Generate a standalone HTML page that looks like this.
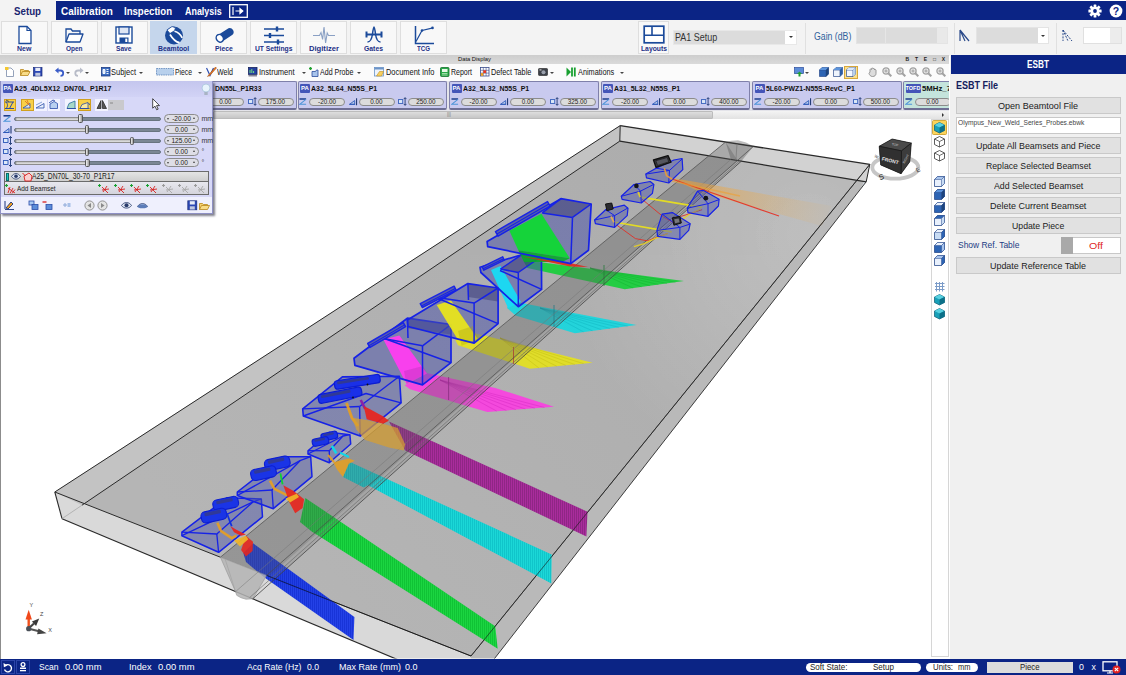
<!DOCTYPE html>
<html><head><meta charset="utf-8"><title>ESBT</title>
<style>
*{box-sizing:border-box;margin:0;padding:0}
html,body{width:1126px;height:675px;overflow:hidden;background:#fff;font-family:"Liberation Sans",sans-serif;font-size:9px;color:#222}
div,span,b,i,svg{position:absolute;white-space:nowrap}
#view{left:0;top:0;width:1126px;height:675px}
#top{left:0;top:1px;width:1126px;height:18.7px;background:#0b2485}
#top b{height:19px;line-height:19px;color:#fff}
#ribbon{left:0;top:19.7px;width:1126px;height:36.3px;background:#f3f3f3}
.rb{top:1.8px;width:47px;height:32.3px;background:#f8f8f8;border:1px solid #dedede;text-align:center}

.rb.sel{background:#c5d6ec;border-color:#c5d6ec}
.rb svg{left:50%;top:3px;margin-left:-11px}
.sep{top:2px;width:1px;height:31px;background:#e0e0e0}
#gstrip{left:0;top:55.2px;width:948.7px;height:8.6px;background:linear-gradient(#cdcdcd,#dadada);font-size:5.8px;color:#111;line-height:9px}
#tbar{left:0;top:63.7px;width:948.7px;height:17.3px;background:#fbfbfb;font-size:8.3px;line-height:15px;color:#111}
#tbar span{top:1px}
#tbar i.ar{top:8px;width:0;height:0;border:2px solid transparent;border-top:2.5px solid #444}
#probes{left:0;top:81px;width:948.7px;overflow:hidden;height:30px;background:#e4e4ea}
.pt{top:-0.5px;height:29.5px;background:#c9caef;border:1px solid #7f80aa;border-bottom:2px solid #6e6f94;border-radius:2px;overflow:hidden}

.pt i.pa{left:1.5px;top:2.5px;width:10px;height:9px;background:#4455b8;color:#fff;font-size:6px;font-style:normal;font-weight:bold;line-height:9px;text-align:center;border-radius:1px}
.pill{top:16px;height:8.5px;width:36px;border:1px solid #8c8c8c;border-radius:5px;background:#dcdcdc;font-size:6.3px;line-height:6.5px;text-align:center;color:#222}
.pic{top:15.5px;width:9px;height:9px}
#hscroll{left:213px;top:111px;width:735.7px;height:8px;background:linear-gradient(#f4f4f4,#e2e2e2)}
#right{left:950px;top:56px;width:176px;height:603px;background:#f0f0f0}
#right .btn{left:5.5px;width:165.5px;height:17.2px;background:#e1e1e1;border:1px solid #c9c9c9;text-align:center;font-size:9.3px;line-height:14.5px;color:#222}
#status{left:0;top:659px;width:1126px;height:16px;background:#0b2485;color:#fff;font-size:8.3px;line-height:15px}
#status span{top:0.5px}
#panel{left:0;top:81px;width:212.5px;height:132.5px;background:#d7d8f8;border:1px solid #8e90c4;border-top:none;box-shadow:1.5px 1.5px 2px rgba(60,60,80,.65)}
#panel .sl{left:13px;width:147px;height:4px;border-radius:2px;background:#7b8794;border:0.5px solid #687480}
#panel .sl i{left:-0.5px;top:-0.5px;height:4px;background:linear-gradient(#bdbdbd,#e2e2e2);border-radius:2px;border:0.5px solid #8c8c8c}
#panel .kn{width:4.5px;height:8.5px;background:linear-gradient(90deg,#f4f4f4,#999);border:0.5px solid #555;border-radius:1.5px}
#panel .pv{left:163px;width:35px;height:9px;border:1px solid #8c8c8c;border-radius:5px;background:#dedee6;font-size:6.6px;line-height:7px;text-align:center;color:#222}
#panel .un{left:200.5px;font-size:7px;line-height:9px;color:#333}
</style></head><body>
<div id="top">
<div style="left:0;top:-1px;width:56px;height:21px;background:#f3f3f3"></div>
<b style="left:14.2px;top:1.2px;font-size:10px;color:#1a2670;transform:scaleX(0.972);transform-origin:0 0;">Setup</b><b style="left:60.7px;top:0.9px;font-size:10px;transform:scaleX(0.992);transform-origin:0 0;">Calibration</b><b style="left:123.7px;top:0.9px;font-size:10px;transform:scaleX(0.960);transform-origin:0 0;">Inspection</b><b style="left:184.5px;top:0.9px;font-size:10px;transform:scaleX(0.892);transform-origin:0 0;">Analysis</b>
<svg style="left:229px;top:3px" width="19" height="14" viewBox="0 0 19 14"><rect x="0.7" y="0.7" width="17.6" height="12.6" fill="none" stroke="#fff" stroke-width="1.3"/><path d="M4 3v8M6.5 7h7M11 4.6L13.8 7 11 9.4z" stroke="#fff" stroke-width="1.2" fill="#fff"/></svg>
<svg style="left:1088px;top:3px" width="14" height="14" viewBox="-7 -7 14 14"><g fill="#fff"><circle r="4.3"/><g id="gt"><rect x="-1.4" y="-6.6" width="2.8" height="13.2" rx="0.5"/></g><use href="#gt" transform="rotate(45)"/><use href="#gt" transform="rotate(90)"/><use href="#gt" transform="rotate(135)"/></g><circle r="1.9" fill="#0b2485"/></svg>
<svg style="left:1108.5px;top:3px" width="14" height="14" viewBox="-7 -7 14 14"><circle r="6.4" fill="#fff"/><text x="0" y="3.6" text-anchor="middle" font-family="Liberation Sans,sans-serif" font-weight="bold" font-size="10.5" fill="#0b2485">?</text></svg>
</div>
<div id="ribbon"><div class="rb" style="left:1px;width:47px"><svg width="22" height="20" viewBox="0 0 22 20"><path d="M5 1.5h8l4 4v13H5z" fill="#fff" stroke="#1b4a9a" stroke-width="1.3"/><path d="M13 1.5v4h4" fill="none" stroke="#1b4a9a" stroke-width="1.2"/></svg><b style="left:15.35px;top:22px;font-size:7.8px;line-height:9px;color:#1c2f86;transform:scaleX(0.892);transform-origin:0 0;">New</b></div><div class="rb" style="left:50.5px;width:47px"><svg width="22" height="20" viewBox="0 0 22 20"><path d="M3 17V4h5l1.5 2H17v3" fill="none" stroke="#1b4a9a" stroke-width="1.3"/><path d="M3 17l3-8h14l-3 8z" fill="#fff" stroke="#1b4a9a" stroke-width="1.3" stroke-linejoin="round"/></svg><b style="left:14.25px;top:22px;font-size:7.8px;line-height:9px;color:#1c2f86;transform:scaleX(0.828);transform-origin:0 0;">Open</b></div><div class="rb" style="left:100.5px;width:47px"><svg width="22" height="20" viewBox="0 0 22 20"><rect x="3" y="2" width="16" height="16" fill="#fff" stroke="#1b4a9a" stroke-width="1.4"/><rect x="6" y="2" width="10" height="7" fill="#dfe6f4" stroke="#1b4a9a" stroke-width="1.2"/><rect x="6.5" y="12.5" width="9" height="5.5" fill="#1b4a9a"/><rect x="12.3" y="13.6" width="2" height="3.4" fill="#fff"/></svg><b style="left:14.75px;top:22px;font-size:7.8px;line-height:9px;color:#1c2f86;transform:scaleX(0.851);transform-origin:0 0;">Save</b></div><div class="rb sel" style="left:150px;width:47px"><svg width="22" height="20" viewBox="0 0 22 20"><circle cx="11" cy="10.5" r="9" fill="#1b4a9a"/><path d="M4 5l5-3.5 3.5 1.2-1 3L7 8.5z" fill="#fff" stroke="#1b4a9a" stroke-width="0.8"/><path d="M7 9.5c3 5 6 7.5 9.5 8.2M11.5 6.3c3 .8 6 3 7.7 6.5" stroke="#fff" stroke-width="1.7" fill="none"/></svg><b style="left:6.9px;top:22px;font-size:7.8px;line-height:9px;color:#1c2f86;transform:scaleX(0.878);transform-origin:0 0;">Beamtool</b></div><div class="rb" style="left:200px;width:47px"><svg width="22" height="20" viewBox="0 0 22 20"><path d="M5 10L15.5 3.2a4 4 0 0 1 4 6.6L9 16.8z" fill="#1b4a9a"/><ellipse cx="6.8" cy="13.3" rx="3.4" ry="4" transform="rotate(-33 6.8 13.3)" fill="#fff" stroke="#1b4a9a" stroke-width="1.5"/></svg><b style="left:13.6px;top:22px;font-size:7.8px;line-height:9px;color:#1c2f86;transform:scaleX(0.873);transform-origin:0 0;">Piece</b></div><div class="rb" style="left:250px;width:47px"><svg width="22" height="20" viewBox="0 0 22 20"><g stroke="#1b4a9a" stroke-width="1.6"><path d="M1 4h20M1 10.5h20M1 17h20"/><path d="M14 1.5v5M7 8v5M15 14.5v5" stroke-width="2.4"/></g></svg><b style="left:3.75px;top:22px;font-size:7.8px;line-height:9px;color:#1c2f86;transform:scaleX(0.865);transform-origin:0 0;">UT Settings</b></div><div class="rb" style="left:300px;width:47px"><svg width="22" height="20" viewBox="0 0 22 20"><path d="M0 10.5h6.5l1.5-3 1.6 7L11 2l1.6 16 1.6-10 1.3 2.5H22" fill="none" stroke="#8aa0c4" stroke-width="1.1"/></svg><b style="left:7.5px;top:22px;font-size:7.8px;line-height:9px;color:#1c2f86;transform:scaleX(0.975);transform-origin:0 0;">Digitizer</b></div><div class="rb" style="left:350px;width:47px"><svg width="22" height="20" viewBox="0 0 22 20"><path d="M4.500 17c3.200 0 4.300-3 5-8C10 5 10.500 2 11 2s1 3 1.500 7c.7 5 1.800 8 5 8" fill="none" stroke="#1b4a9a" stroke-width="1.500"/><path d="M3.500 9.500h15M3.500 6.500v6M18.500 6.500v6" stroke="#1b4a9a" stroke-width="2" fill="none"/></svg><b style="left:13.0px;top:22px;font-size:7.8px;line-height:9px;color:#1c2f86;transform:scaleX(0.876);transform-origin:0 0;">Gates</b></div><div class="rb" style="left:400px;width:47px"><svg width="22" height="20" viewBox="0 0 22 20"><path d="M2.500 1v17.500H21" fill="none" stroke="#1b4a9a" stroke-width="1.5"/><path d="M3 16.500L9 5.500l11-2.700" fill="none" stroke="#1b4a9a" stroke-width="1.2"/><circle cx="9" cy="5.500" r="1.300" fill="#1b4a9a"/><circle cx="19.500" cy="2.900" r="1.300" fill="#1b4a9a"/></svg><b style="left:16.0px;top:22px;font-size:7.8px;line-height:9px;color:#1c2f86;transform:scaleX(0.790);transform-origin:0 0;">TCG</b></div><div class="rb" style="left:638px;width:31px;height:32.5px"><svg width="22" height="20" viewBox="0 0 22 20"><rect x="1.200" y="1.200" width="19.600" height="16.600" fill="#fff" stroke="#1b4a9a" stroke-width="1.700"/><path d="M9 1.200v9M1.200 10.200h19.600" stroke="#1b4a9a" stroke-width="1.600"/></svg><b style="left:1.5500000000000007px;top:22px;font-size:7.8px;line-height:9px;color:#1c2f86;transform:scaleX(0.866);transform-origin:0 0;">Layouts</b></div><div style="left:0;top:1.3px;width:1126px;height:0"><div style="left:672.500px;top:9px;width:124.500px;height:15px;background:#dcdcdc;border:1px solid #e8e8e8"></div>
<div style="left:785px;top:10px;width:11px;height:13px;background:#fff"></div><i style="left:788.500px;top:15.500px;border:2px solid transparent;border-top:2.500px solid #333;width:0;height:0"></i>
<span style="left:675.3px;top:10px;font-size:10.8px;line-height:13px;color:#333;transform:scaleX(0.832);transform-origin:0 0;">PA1 Setup</span>
<div class="sep" style="left:804.500px"></div>
<span style="left:814px;top:9.5px;font-size:10.5px;line-height:13px;color:#2f5f9c;transform:scaleX(0.830);transform-origin:0 0;">Gain (dB)</span>
<div style="left:855.500px;top:6.500px;width:92.500px;height:17px;background:#dcdcdc;border:1px solid #e4e4e4"></div>
<div style="left:885px;top:7.500px;width:1px;height:15px;background:#e6e6e6"></div>
<div style="left:937px;top:7.500px;width:10px;height:15px;background:#e9e9e9"></div>
<div class="sep" style="left:953.500px"></div>
<svg style="left:958px;top:8px" width="13" height="13" viewBox="0 0 13 13"><path d="M2 1v11M2 1l9 11M2 1l5 11" stroke="#2a4a8a" stroke-width="1.200" fill="none"/></svg>
<div style="left:975.500px;top:6.500px;width:73.500px;height:17px;background:#dcdcdc;border:1px solid #e4e4e4"></div>
<div style="left:1038px;top:7.500px;width:10px;height:15px;background:#fff"></div><i style="left:1041px;top:14.500px;border:2px solid transparent;border-top:2.500px solid #333;width:0;height:0"></i>
<div class="sep" style="left:1055.500px"></div>
<svg style="left:1061px;top:8px" width="13" height="13" viewBox="0 0 13 13"><path d="M2 1v11M2 1l9 11M2 1l5 11" stroke="#2a4a8a" stroke-width="1" fill="none" stroke-dasharray="2 1.200"/></svg>
<div style="left:1082.500px;top:6.500px;width:39px;height:17px;background:#fff;border:1px solid #e0e0e0"></div>
<div style="left:1110px;top:7.500px;width:10.500px;height:15px;background:#ececec"></div>
</div></div>
<div id="gstrip"><span style="left:458px;top:0">Data Display</span><b style="left:905.5px;top:0;font-size:5px;letter-spacing:5.8px;color:#222">BTE&#9633;X</b></div><div id="tbar"><svg style="left:4.5px;top:3.8px" width="11" height="10" viewBox="0 0 11 10"><path d="M1.500 1h4.500l2.500 2.500v6h-7z" fill="#fff" stroke="#7a8aa8" stroke-width="0.800"/><path d="M0 0h3.500v3H0z" fill="#f4c830"/></svg><svg style="left:19.5px;top:3.8px" width="11" height="10" viewBox="0 0 11 10"><path d="M0.500 8.500v-6h3l1 1h4v1.500" fill="#f6d270" stroke="#b8861c" stroke-width="0.800"/><path d="M0.500 8.500l2-4h7.500l-2 4z" fill="#f8dc88" stroke="#b8861c" stroke-width="0.800"/></svg><svg style="left:33px;top:3.8px" width="11" height="10" viewBox="0 0 11 10"><rect x="0.500" y="0.500" width="8.500" height="8.500" fill="#2c48b4" stroke="#1a2c7c" stroke-width="0.700"/><rect x="2.300" y="0.800" width="5" height="3.200" fill="#e8ecf8"/><rect x="2.300" y="5.800" width="5" height="3" fill="#c0c8e0"/></svg><svg style="left:54.5px;top:3.8px" width="11" height="10" viewBox="0 0 11 10"><path d="M2 3.500h3.500a2.700 2.700 0 0 1 0 5.400" fill="none" stroke="#3a5cc8" stroke-width="1.800"/><path d="M0 3.500l3.500-3v6z" fill="#3a5cc8"/></svg><svg style="left:73.5px;top:3.8px" width="11" height="10" viewBox="0 0 11 10"><path d="M7.500 3.500H4a2.700 2.700 0 0 0 0 5.400" fill="none" stroke="#b8bcc8" stroke-width="1.800"/><path d="M9.500 3.500l-3.500-3v6z" fill="#b8bcc8"/></svg><svg style="left:100.5px;top:3.8px" width="11" height="10" viewBox="0 0 11 10"><rect x="0.500" y="0.500" width="8.500" height="8.500" fill="#3a6cc0" stroke="#1c3c84" stroke-width="0.800"/><path d="M2 2.500h2v4H2zM5.500 2.500h2M5.500 4.500h2M5.500 6.500h2" stroke="#fff" stroke-width="0.900" fill="#cfe0f8"/></svg><svg style="left:156px;top:3.8px" width="18" height="10" viewBox="0 0 18 10"><rect x="0.500" y="1.500" width="17" height="6.500" fill="#b8d0ec" stroke="#5c84b8" stroke-width="0.800" stroke-dasharray="1.500 0.800"/></svg><svg style="left:205.5px;top:3.8px" width="11" height="10" viewBox="0 0 11 10"><path d="M0.500 1l3.500 7.500L7.500 1" fill="none" stroke="#2a4cb0" stroke-width="1.200"/><path d="M9.500 0L3 7.500l-1.500 2 2.300-1L10.500 1z" fill="#e87820" stroke="#a04c10" stroke-width="0.500"/></svg><svg style="left:247.5px;top:3.8px" width="11" height="10" viewBox="0 0 11 10"><rect x="0.500" y="0.500" width="8.500" height="7" fill="#2440a0" stroke="#16245c" stroke-width="0.800"/><path d="M2 6V3M3.800 6V2M5.600 6V4" stroke="#7cf07c" stroke-width="0.900"/><rect x="0.500" y="7.800" width="8.500" height="1.700" fill="#889"/></svg><svg style="left:308.5px;top:3.8px" width="11" height="10" viewBox="0 0 11 10"><path d="M1.500 0v3M0 1.500h3" stroke="#20a030" stroke-width="1.300"/><path d="M3 4.500h3.500l1-1.500h1.500v6.500H3z" fill="#a8c4ec" stroke="#2c4c9c" stroke-width="0.800"/></svg><svg style="left:374px;top:3.8px" width="11" height="10" viewBox="0 0 11 10"><rect x="0.500" y="0.500" width="9" height="8.500" fill="#eef4fc" stroke="#6c94c8" stroke-width="0.800"/><rect x="0.500" y="0.500" width="9" height="2" fill="#6c94c8"/><path d="M2.500 9l3-4.500h4l-2 4.500z" fill="#f8d060" stroke="#c09020" stroke-width="0.600"/></svg><svg style="left:440px;top:3.8px" width="11" height="10" viewBox="0 0 11 10"><rect x="0.500" y="0.500" width="8.500" height="9" rx="1" fill="#28a848" stroke="#14702c" stroke-width="0.800"/><rect x="2" y="2" width="5.500" height="3" fill="#e8f8e8"/><path d="M2 6.500h5.500M2 8h5.500" stroke="#d0f0d0" stroke-width="0.700"/></svg><svg style="left:479.5px;top:3.8px" width="11" height="10" viewBox="0 0 11 10"><rect x="0.500" y="0.500" width="8.500" height="8.500" fill="#fff" stroke="#3a4c8c" stroke-width="0.800"/><path d="M0.500 3.300h8.500M0.500 6.100h8.500M3.300 0.500v8.500M6.100 0.500v8.500" stroke="#3a4c8c" stroke-width="0.600"/><rect x="3.300" y="3.300" width="2.800" height="2.800" fill="#e83820"/><rect x="0.800" y="6.100" width="2.500" height="2.700" fill="#f0a020"/></svg><svg style="left:537.5px;top:3.8px" width="11" height="10" viewBox="0 0 11 10"><rect x="0.500" y="1.500" width="9" height="7" rx="0.800" fill="#3c4048" stroke="#222" stroke-width="0.600"/><circle cx="5.500" cy="5.300" r="2" fill="#9aa0ac"/><rect x="1.500" y="2.300" width="2" height="1.200" fill="#ccc"/></svg><svg style="left:566px;top:3.8px" width="11" height="10" viewBox="0 0 11 10"><path d="M0.500 0.500l4.500 4.500-4.500 4.500z" fill="#18a030"/><path d="M6 0.500v9M8.800 0.500v9" stroke="#18a030" stroke-width="1.800"/></svg><svg style="left:793.5px;top:3.8px" width="11" height="10" viewBox="0 0 11 10"><rect x="0.500" y="0.500" width="9" height="6" fill="#5c8cd8" stroke="#2c4c9c" stroke-width="0.700"/><path d="M3 7l2.500-2.500L8 7z" fill="#20a030"/><rect x="4.500" y="7" width="2" height="2.500" fill="#20a030"/></svg><svg style="left:818.5px;top:3.8px" width="11" height="10" viewBox="0 0 11 10"><path d="M0.500 3l2.500-2.500h6.500v6.500L7 9.500H0.500z" fill="#2c64b4" stroke="#2c4c8c" stroke-width="0.700"/><path d="M0.500 3h6.500v6.500M7 3l2.500-2.500" fill="none" stroke="#2c4c8c" stroke-width="0.700"/><path d="M0.500 3l2.500-2.500h6.500L7 3z" fill="#5c94dc"/><path d="M7 3l2.500-2.500v6.500L7 9.500z" fill="#1c447c"/></svg><svg style="left:833px;top:3.8px" width="11" height="10" viewBox="0 0 11 10"><path d="M0.500 3l2.500-2.500h6.500v6.500L7 9.500H0.500z" fill="#eef4fc" stroke="#2c4c8c" stroke-width="0.700"/><path d="M0.500 3h6.500v6.500M7 3l2.500-2.500" fill="none" stroke="#2c4c8c" stroke-width="0.700"/><path d="M0.500 3l2.500-2.500h6.500L7 3z" fill="#5c94dc"/><path d="M7 3l2.500-2.500v6.500L7 9.500z" fill="#2c5ca4"/></svg><svg style="left:868px;top:3.8px" width="11" height="10" viewBox="0 0 11 10"><path d="M2 5V2.500a.8.800 0 0 1 1.500 0V1.500a.8.800 0 0 1 1.500 0V2a.8.800 0 0 1 1.500 0v1a.8.800 0 0 1 1.500 0v3.500c0 2-1.500 3-3.500 3S1.500 8 1 6.500z" fill="#dcdcdc" stroke="#8c8c8c" stroke-width="0.900"/></svg><svg style="left:882px;top:3.8px" width="11" height="10" viewBox="0 0 11 10"><circle cx="4" cy="4" r="3.100" fill="#ececec" stroke="#a2a2a2" stroke-width="1.300"/><path d="M6.300 6.300l3 3" stroke="#a2a2a2" stroke-width="2"/><path d="M2.300 4h3.400M4 2.300v3.400" stroke="#999" stroke-width="0.900"/></svg><svg style="left:895.7px;top:3.8px" width="11" height="10" viewBox="0 0 11 10"><circle cx="4" cy="4" r="3.100" fill="#ececec" stroke="#a2a2a2" stroke-width="1.300"/><path d="M6.300 6.300l3 3" stroke="#a2a2a2" stroke-width="2"/><path d="M2.300 4h3.400M4 2.300v3.400" stroke="#999" stroke-width="0.900"/></svg><svg style="left:909.3px;top:3.8px" width="11" height="10" viewBox="0 0 11 10"><circle cx="4" cy="4" r="3.100" fill="#ececec" stroke="#a2a2a2" stroke-width="1.300"/><path d="M6.300 6.300l3 3" stroke="#a2a2a2" stroke-width="2"/><path d="M2.300 4h3.400M4 2.300v3.400" stroke="#999" stroke-width="0.900"/></svg><svg style="left:922px;top:3.8px" width="11" height="10" viewBox="0 0 11 10"><circle cx="4" cy="4" r="3.100" fill="#ececec" stroke="#a2a2a2" stroke-width="1.300"/><path d="M6.300 6.300l3 3" stroke="#a2a2a2" stroke-width="2"/><path d="M2.300 4h3.400M4 2.300v3.400" stroke="#999" stroke-width="0.900"/></svg><svg style="left:935.6px;top:3.8px" width="11" height="10" viewBox="0 0 11 10"><circle cx="4" cy="4" r="3.100" fill="#ececec" stroke="#a2a2a2" stroke-width="1.300"/><path d="M6.300 6.300l3 3" stroke="#a2a2a2" stroke-width="2"/><path d="M2.300 4h3.400M4 2.300v3.400" stroke="#999" stroke-width="0.900"/></svg><div style="left:844px;top:2.300px;width:14px;height:13px;background:#fbe08c;border:1px solid #d8a83c"></div><svg style="left:846px;top:3.8px" width="11" height="10" viewBox="0 0 11 10"><path d="M0.500 3l2.500-2.500h6.500v6.500L7 9.500H0.500z" fill="#f4f8ff" stroke="#2c4c8c" stroke-width="0.700"/><path d="M0.500 3h6.500v6.500M7 3l2.500-2.500" fill="none" stroke="#2c4c8c" stroke-width="0.700"/><path d="M0.500 3l2.500-2.500h6.500L7 3z" fill="#dce8f8"/><path d="M7 3l2.500-2.500v6.500L7 9.500z" fill="#b8d0ec"/></svg><span style="left:111px;top:1px;font-size:8.2px;transform:scaleX(0.914);transform-origin:0 0;">Subject</span><span style="left:175px;top:1px;font-size:8.2px;transform:scaleX(0.829);transform-origin:0 0;">Piece</span><span style="left:216.5px;top:1px;font-size:8.2px;transform:scaleX(0.863);transform-origin:0 0;">Weld</span><span style="left:259.4px;top:1px;font-size:8.2px;transform:scaleX(0.919);transform-origin:0 0;">Instrument</span><span style="left:319.6px;top:1px;font-size:8.2px;transform:scaleX(0.862);transform-origin:0 0;">Add Probe</span><span style="left:385.5px;top:1px;font-size:8.2px;transform:scaleX(0.909);transform-origin:0 0;">Document Info</span><span style="left:451.4px;top:1px;font-size:8.2px;transform:scaleX(0.857);transform-origin:0 0;">Report</span><span style="left:490.6px;top:1px;font-size:8.2px;transform:scaleX(0.889);transform-origin:0 0;">Defect Table</span><span style="left:577.5px;top:1px;font-size:8.2px;transform:scaleX(0.895);transform-origin:0 0;">Animations</span><i class="ar" style="left:66px"></i><i class="ar" style="left:85px"></i><i class="ar" style="left:139px"></i><i class="ar" style="left:198px"></i><i class="ar" style="left:301.5px"></i><i class="ar" style="left:356.5px"></i><i class="ar" style="left:549.5px"></i><i class="ar" style="left:620px"></i><i class="ar" style="left:805px"></i></div>
<div id="probes"><div class="pt" style="left:150px;width:146.500px"><b style="left:64.4px;top:2.3px;font-size:7.8px;line-height:10px;color:#111;transform:scaleX(0.879);transform-origin:0 0;">DN55L_P1R33</b><span class="pill" style="left:56.500px;width:36px">0.00</span><svg class="pic" style="left:96.5px" viewBox="0 0 9.500 9" width="9.500" height="9"><rect x="0.500" y="2.500" width="4.500" height="4" fill="#dce8f8" stroke="#2c58b8" stroke-width="0.900"/><path d="M7.500 0.500v8M6 2l1.500-1.500L9 2M6 7l1.500 1.500L9 7" stroke="#1a3470" stroke-width="0.900" fill="none"/></svg><span class="pill" style="left:106.500px">175.00</span></div><div class="pt" style="left:297.5px;width:149.5px"><i class="pa">PA</i><b style="left:12.7px;top:2.3px;font-size:7.8px;line-height:10px;color:#111;transform:scaleX(0.893);transform-origin:0 0;">A32_5L64_N55S_P1</b><svg class="pic" style="left:0.5px" viewBox="0 0 9.500 9" width="9.500" height="9"><path d="M0.500 1.800h7" stroke="#1c3c8c" stroke-width="1.600"/><path d="M7.300 2.300L1 7.300h6.500" stroke="#4c94d8" stroke-width="1.100" fill="none"/></svg><span class="pill" style="left:10.5px">-20.00</span><svg class="pic" style="left:50.0px" viewBox="0 0 9.500 9" width="9.500" height="9"><path d="M0.500 7.500L6 3.500v4zM0.500 7.500h6" stroke="#2c58b8" stroke-width="0.900" fill="#b8ccec"/><path d="M8 1v7.500" stroke="#1a3470" stroke-width="1.100"/></svg><span class="pill" style="left:60.0px">0.00</span><svg class="pic" style="left:99.5px" viewBox="0 0 9.500 9" width="9.500" height="9"><rect x="0.500" y="2.500" width="4.500" height="4" fill="#dce8f8" stroke="#2c58b8" stroke-width="0.900"/><path d="M7.500 0.500v8M6 2l1.500-1.500L9 2M6 7l1.500 1.500L9 7" stroke="#1a3470" stroke-width="0.900" fill="none"/></svg><span class="pill" style="left:109.5px">250.00</span></div><div class="pt" style="left:449px;width:149.5px"><i class="pa">PA</i><b style="left:12.7px;top:2.3px;font-size:7.8px;line-height:10px;color:#111;transform:scaleX(0.893);transform-origin:0 0;">A32_5L32_N55S_P1</b><svg class="pic" style="left:0.5px" viewBox="0 0 9.500 9" width="9.500" height="9"><path d="M0.500 1.800h7" stroke="#1c3c8c" stroke-width="1.600"/><path d="M7.300 2.300L1 7.300h6.500" stroke="#4c94d8" stroke-width="1.100" fill="none"/></svg><span class="pill" style="left:10.5px">-20.00</span><svg class="pic" style="left:50.0px" viewBox="0 0 9.500 9" width="9.500" height="9"><path d="M0.500 7.500L6 3.500v4zM0.500 7.500h6" stroke="#2c58b8" stroke-width="0.900" fill="#b8ccec"/><path d="M8 1v7.500" stroke="#1a3470" stroke-width="1.100"/></svg><span class="pill" style="left:60.0px">0.00</span><svg class="pic" style="left:99.5px" viewBox="0 0 9.500 9" width="9.500" height="9"><rect x="0.500" y="2.500" width="4.500" height="4" fill="#dce8f8" stroke="#2c58b8" stroke-width="0.900"/><path d="M7.500 0.500v8M6 2l1.500-1.500L9 2M6 7l1.500 1.500L9 7" stroke="#1a3470" stroke-width="0.900" fill="none"/></svg><span class="pill" style="left:109.5px">325.00</span></div><div class="pt" style="left:600.5px;width:149.5px"><i class="pa">PA</i><b style="left:12.7px;top:2.3px;font-size:7.8px;line-height:10px;color:#111;transform:scaleX(0.893);transform-origin:0 0;">A31_5L32_N55S_P1</b><svg class="pic" style="left:0.5px" viewBox="0 0 9.500 9" width="9.500" height="9"><path d="M0.500 1.800h7" stroke="#1c3c8c" stroke-width="1.600"/><path d="M7.300 2.300L1 7.300h6.500" stroke="#4c94d8" stroke-width="1.100" fill="none"/></svg><span class="pill" style="left:10.5px">-20.00</span><svg class="pic" style="left:50.0px" viewBox="0 0 9.500 9" width="9.500" height="9"><path d="M0.500 7.500L6 3.500v4zM0.500 7.500h6" stroke="#2c58b8" stroke-width="0.900" fill="#b8ccec"/><path d="M8 1v7.500" stroke="#1a3470" stroke-width="1.100"/></svg><span class="pill" style="left:60.0px">0.00</span><svg class="pic" style="left:99.5px" viewBox="0 0 9.500 9" width="9.500" height="9"><rect x="0.500" y="2.500" width="4.500" height="4" fill="#dce8f8" stroke="#2c58b8" stroke-width="0.900"/><path d="M7.500 0.500v8M6 2l1.500-1.500L9 2M6 7l1.500 1.500L9 7" stroke="#1a3470" stroke-width="0.900" fill="none"/></svg><span class="pill" style="left:109.5px">400.00</span></div><div class="pt" style="left:752px;width:149.5px"><i class="pa">PA</i><b style="left:12.7px;top:2.3px;font-size:7.8px;line-height:10px;color:#111;transform:scaleX(0.884);transform-origin:0 0;">5L60-PWZ1-N55S-RevC_P1</b><svg class="pic" style="left:0.5px" viewBox="0 0 9.500 9" width="9.500" height="9"><path d="M0.500 1.800h7" stroke="#1c3c8c" stroke-width="1.600"/><path d="M7.300 2.300L1 7.300h6.500" stroke="#4c94d8" stroke-width="1.100" fill="none"/></svg><span class="pill" style="left:10.5px">-20.00</span><svg class="pic" style="left:50.0px" viewBox="0 0 9.500 9" width="9.500" height="9"><path d="M0.500 7.500L6 3.500v4zM0.500 7.500h6" stroke="#2c58b8" stroke-width="0.900" fill="#b8ccec"/><path d="M8 1v7.500" stroke="#1a3470" stroke-width="1.100"/></svg><span class="pill" style="left:60.0px">0.00</span><svg class="pic" style="left:99.5px" viewBox="0 0 9.500 9" width="9.500" height="9"><rect x="0.500" y="2.500" width="4.500" height="4" fill="#dce8f8" stroke="#2c58b8" stroke-width="0.900"/><path d="M7.500 0.500v8M6 2l1.500-1.500L9 2M6 7l1.500 1.500L9 7" stroke="#1a3470" stroke-width="0.900" fill="none"/></svg><span class="pill" style="left:109.5px">500.00</span></div><div class="pt" style="left:903px;width:60px;background:#c4e4dc"><i class="pa" style="width:15px;font-size:5.500px">TOFD</i><b style="left:17.5px;top:2.3px;font-size:7.8px;line-height:10px;color:#111;transform:scaleX(0.998);transform-origin:0 0;">5MHz_7</b><svg class="pic" style="left:0.5px" viewBox="0 0 9.500 9" width="9.500" height="9"><path d="M0.500 1.800h7" stroke="#1c3c8c" stroke-width="1.600"/><path d="M7.300 2.300L1 7.300h6.500" stroke="#4c94d8" stroke-width="1.100" fill="none"/></svg><span class="pill" style="left:10.5px">0.00</span></div></div><div id="hscroll"><div style="left:0;top:0;width:499.5px;height:8px;background:linear-gradient(#dedede,#c6c6c6);border:1px solid #bcbcbc;border-radius:1px"></div><span style="left:234px;top:0;font-size:5px;line-height:7px;color:#777">|||</span><i style="left:729px;top:2px;border:2px solid transparent;border-left:2.500px solid #333;width:0;height:0"></i></div>
<div id="view"><svg width="1126" height="675" viewBox="0 0 1126 675" style="position:absolute;left:0;top:0"><defs>
<linearGradient id="gtop" gradientUnits="userSpaceOnUse" x1="750" y1="140" x2="250" y2="600"><stop offset="0" stop-color="#acacac"/><stop offset="1" stop-color="#b5b5b5"/></linearGradient>
<pattern id="hblue" width="2" height="2" patternUnits="userSpaceOnUse"><rect width="2" height="2" fill="#1636e8"/><rect width="1" height="2" fill="#0a28d8"/></pattern>
<pattern id="hgreen" width="2" height="2" patternUnits="userSpaceOnUse"><rect width="2" height="2" fill="#10d838"/><rect width="1" height="2" fill="#04c42c"/></pattern>
<pattern id="hcyan" width="2" height="2" patternUnits="userSpaceOnUse"><rect width="2" height="2" fill="#10dada"/><rect width="1" height="2" fill="#04c6cc"/></pattern>
<pattern id="hpurple" width="2" height="2" patternUnits="userSpaceOnUse"><rect width="2" height="2" fill="#a8229a"/><rect width="1" height="2" fill="#8c1c82"/></pattern>
<linearGradient id="gfan" gradientUnits="userSpaceOnUse" x1="672" y1="180" x2="830" y2="215"><stop offset="0" stop-color="#f0a030" stop-opacity="0.6"/><stop offset="0.5" stop-color="#f0a840" stop-opacity="0.33"/><stop offset="1" stop-color="#f0b050" stop-opacity="0.05"/></linearGradient>
<radialGradient id="glite" gradientUnits="userSpaceOnUse" cx="810" cy="235" r="250"><stop offset="0" stop-color="#fff" stop-opacity="0.22"/><stop offset="0.45" stop-color="#fff" stop-opacity="0.13"/><stop offset="1" stop-color="#fff" stop-opacity="0"/></radialGradient>
<clipPath id="vclip"><rect x="0" y="119" width="931" height="539.5"/></clipPath>
</defs><g clip-path="url(#vclip)"><polygon points="54.8,492.0 471.0,656.0 470.0,690.0 62.0,518.7" fill="#d9d9d9" stroke="none" stroke-width="1" opacity="1" />
<polygon points="54.8,492.0 620.2,125.6 869.8,164.4 471.0,656.0" fill="url(#gtop)" stroke="none" stroke-width="1" opacity="1" />
<polygon points="267.4,575.8 754.0,146.4 869.8,164.4 471.0,656.0" fill="url(#glite)" stroke="none" stroke-width="1" opacity="1" />
<polygon points="869.8,164.4 866.2,181.8 470.0,690.0 471.0,656.0" fill="#b9b9b9" stroke="none" stroke-width="1" opacity="1" />
<polygon points="869.8,164.4 866.2,181.8 861.0,189.0" fill="#d3d9e0" stroke="none" stroke-width="1" opacity="1" />
<polygon points="620.2,125.6 869.8,164.4 866.2,181.8 619.8,141.1" fill="#d2d2d2" stroke="none" stroke-width="1" opacity="1" />
<polygon points="54.8,492.0 620.2,125.6 619.8,141.1 82.0,505.2" fill="#c3c3c3" stroke="none" stroke-width="1" opacity="1" />
<line x1="54.8" y1="492.0" x2="620.2" y2="125.6" stroke="#2a2a2a" stroke-width="1.0" opacity="1" />
<line x1="620.2" y1="125.6" x2="869.8" y2="164.4" stroke="#2a2a2a" stroke-width="1.4" opacity="1" />
<line x1="869.8" y1="164.4" x2="471.0" y2="656.0" stroke="#2a2a2a" stroke-width="0.9" opacity="1" />
<line x1="54.8" y1="492.0" x2="220.4" y2="557.2" stroke="#2a2a2a" stroke-width="1.0" opacity="1" />
<line x1="266.6" y1="575.4" x2="471.0" y2="656.0" stroke="#2a2a2a" stroke-width="1.0" opacity="1" />
<line x1="619.8" y1="141.1" x2="866.2" y2="181.8" stroke="#2a2a2a" stroke-width="1.2" opacity="1" />
<line x1="82.0" y1="505.2" x2="619.8" y2="141.1" stroke="#2a2a2a" stroke-width="1.0" opacity="1" />
<line x1="866.2" y1="181.8" x2="470.0" y2="690.0" stroke="#2a2a2a" stroke-width="0.9" opacity="1" />
<line x1="62.0" y1="518.7" x2="470.0" y2="690.0" stroke="#2a2a2a" stroke-width="1.2" opacity="1" />
<line x1="54.8" y1="492.0" x2="62.0" y2="518.7" stroke="#2a2a2a" stroke-width="1.1" opacity="1" />
<line x1="620.2" y1="125.6" x2="619.8" y2="141.1" stroke="#2a2a2a" stroke-width="1.0" opacity="1" />
<line x1="869.8" y1="164.4" x2="866.2" y2="181.8" stroke="#2a2a2a" stroke-width="1.0" opacity="1" />
<line x1="62.0" y1="518.7" x2="82.0" y2="505.2" stroke="#999" stroke-width="0.6" opacity="1" />
<polygon points="253.1,543.3 354.4,617.0 353.5,640.1 263.8,577.1 246.0,562.0 243.3,553.1" fill="url(#hblue)" stroke="none" stroke-width="1" opacity="0.93" />
<polygon points="305.3,497.9 495.2,626.2 497.7,648.8 311.7,531.5 300.0,522.0" fill="url(#hgreen)" stroke="none" stroke-width="1" opacity="0.93" />
<polygon points="348.9,461.5 551.7,554.4 551.3,583.4 367.9,485.2 363.7,487.4 343.0,477.0" fill="url(#hcyan)" stroke="none" stroke-width="1" opacity="0.93" />
<polygon points="388.9,421.5 587.5,511.7 586.4,536.5 405.2,450.4 397.0,436.0" fill="url(#hpurple)" stroke="none" stroke-width="1" opacity="0.93" />
<polygon points="410.0,389.3 404.7,385.3 427.3,373.3 495.3,388.0 554.0,406.7 487.3,412.0" fill="#ff38e4" stroke="none" stroke-width="1" opacity="0.86" />
<line x1="448.6" y1="377.0" x2="448.6" y2="400.0" stroke="#a01890" stroke-width="0.8" opacity="1" />
<polygon points="458.0,345.3 455.3,340.0 470.0,332.0 592.6,362.8 529.8,368.7" fill="#e8e414" stroke="none" stroke-width="1" opacity="0.86" />
<line x1="513.5" y1="347.0" x2="513.5" y2="364.0" stroke="#d03020" stroke-width="0.8" opacity="1" />
<polygon points="507.0,308.0 510.8,301.1 636.5,324.9 574.9,333.2 515.6,315.4" fill="#10d8e0" stroke="none" stroke-width="1" opacity="0.88" />
<line x1="554.0" y1="305.0" x2="554.0" y2="327.0" stroke="#0a8a9a" stroke-width="0.8" opacity="1" />
<polygon points="524.0,262.0 531.0,261.0 683.9,281.0 624.7,289.3 527.4,268.0" fill="#10d034" stroke="none" stroke-width="1" opacity="0.88" />
<line x1="604.0" y1="265.0" x2="604.0" y2="286.0" stroke="#0a8a2a" stroke-width="0.8" opacity="1" />
<line x1="440.0" y1="380.0" x2="544.5" y2="407.5" stroke="#c010b0" stroke-width="0.6" opacity="0.45" />
<line x1="440.0" y1="380.0" x2="534.9" y2="408.2" stroke="#c010b0" stroke-width="0.6" opacity="0.45" />
<line x1="440.0" y1="380.0" x2="525.4" y2="409.0" stroke="#c010b0" stroke-width="0.6" opacity="0.45" />
<line x1="440.0" y1="380.0" x2="515.9" y2="409.7" stroke="#c010b0" stroke-width="0.6" opacity="0.45" />
<line x1="440.0" y1="380.0" x2="506.4" y2="410.5" stroke="#c010b0" stroke-width="0.6" opacity="0.45" />
<line x1="440.0" y1="380.0" x2="496.8" y2="411.2" stroke="#c010b0" stroke-width="0.6" opacity="0.45" />
<line x1="500.0" y1="338.0" x2="583.6" y2="363.6" stroke="#b0a800" stroke-width="0.6" opacity="0.45" />
<line x1="500.0" y1="338.0" x2="574.7" y2="364.5" stroke="#b0a800" stroke-width="0.6" opacity="0.45" />
<line x1="500.0" y1="338.0" x2="565.7" y2="365.3" stroke="#b0a800" stroke-width="0.6" opacity="0.45" />
<line x1="500.0" y1="338.0" x2="556.7" y2="366.2" stroke="#b0a800" stroke-width="0.6" opacity="0.45" />
<line x1="500.0" y1="338.0" x2="547.7" y2="367.0" stroke="#b0a800" stroke-width="0.6" opacity="0.45" />
<line x1="500.0" y1="338.0" x2="538.8" y2="367.9" stroke="#b0a800" stroke-width="0.6" opacity="0.45" />
<line x1="540.0" y1="308.0" x2="627.7" y2="326.1" stroke="#00a0b0" stroke-width="0.6" opacity="0.45" />
<line x1="540.0" y1="308.0" x2="618.9" y2="327.3" stroke="#00a0b0" stroke-width="0.6" opacity="0.45" />
<line x1="540.0" y1="308.0" x2="610.1" y2="328.5" stroke="#00a0b0" stroke-width="0.6" opacity="0.45" />
<line x1="540.0" y1="308.0" x2="601.3" y2="329.6" stroke="#00a0b0" stroke-width="0.6" opacity="0.45" />
<line x1="540.0" y1="308.0" x2="592.5" y2="330.8" stroke="#00a0b0" stroke-width="0.6" opacity="0.45" />
<line x1="540.0" y1="308.0" x2="583.7" y2="332.0" stroke="#00a0b0" stroke-width="0.6" opacity="0.45" />
<line x1="590.0" y1="268.0" x2="675.4" y2="282.2" stroke="#00a020" stroke-width="0.6" opacity="0.45" />
<line x1="590.0" y1="268.0" x2="667.0" y2="283.4" stroke="#00a020" stroke-width="0.6" opacity="0.45" />
<line x1="590.0" y1="268.0" x2="658.5" y2="284.6" stroke="#00a020" stroke-width="0.6" opacity="0.45" />
<line x1="590.0" y1="268.0" x2="650.1" y2="285.7" stroke="#00a020" stroke-width="0.6" opacity="0.45" />
<line x1="590.0" y1="268.0" x2="641.6" y2="286.9" stroke="#00a020" stroke-width="0.6" opacity="0.45" />
<line x1="590.0" y1="268.0" x2="633.2" y2="288.1" stroke="#00a020" stroke-width="0.6" opacity="0.45" />
<polygon points="220.4,557.2 725.6,142.0 737.6,160.6 269.0,576.4 266.6,575.4" fill="#5c5c5c" stroke="none" stroke-width="1" opacity="0.34" />
<polygon points="269.0,576.4 737.6,160.6 741.3,161.2 275.1,578.8" fill="#777" stroke="none" stroke-width="1" opacity="0.22" />
<polygon points="725.6,142.0 731.0,140.8 738.0,140.3 746.0,142.5 753.5,146.3 741.3,161.2 730.9,159.4" fill="#4a4a4a" stroke="none" stroke-width="1" opacity="0.36" />
<line x1="737.0" y1="143.8" x2="735.9" y2="160.3" stroke="#777" stroke-width="0.7" opacity="1" />
<polygon points="220.4,557.2 266.6,575.4 252.8,598.8 246.0,599.2 240.9,597.7 236.7,595.3 235.5,591.5" fill="#b4b4b4" stroke="#909090" stroke-width="0.7" opacity="0.85" />
<line x1="225.2" y1="559.2" x2="235.5" y2="591.5" stroke="#a0a0a0" stroke-width="0.6" opacity="1" />
<line x1="220.4" y1="557.2" x2="725.6" y2="142.0" stroke="#555" stroke-width="0.8" opacity="1" />
<line x1="266.6" y1="575.4" x2="753.5" y2="146.3" stroke="#4a4a4a" stroke-width="0.7" opacity="1" />
<line x1="235.6" y1="591.6" x2="730.9" y2="159.4" stroke="#777" stroke-width="0.5" opacity="1" />
<line x1="249.7" y1="597.5" x2="739.5" y2="160.9" stroke="#666" stroke-width="0.6" opacity="1" />
<line x1="252.8" y1="598.8" x2="741.3" y2="161.2" stroke="#444" stroke-width="0.8" opacity="1" />
<line x1="266.6" y1="575.4" x2="471.0" y2="656.0" stroke="#111" stroke-width="0.9" opacity="0.7" />
<line x1="869.8" y1="164.4" x2="471.0" y2="656.0" stroke="#222" stroke-width="0.8" opacity="0.8" />
<polygon points="354.9,365.4 354.0,358.3 407.4,318.2 451.0,324.5 451.0,362.7 422.5,384.9" fill="#4a52a8" stroke="none" stroke-width="1" opacity="0.52" />
<polygon points="407.4,318.2 451.0,324.5 451.0,334.5 407.8,328.2" fill="#20205c" stroke="none" stroke-width="1" opacity="0.34" />
<polygon points="383.4,339.6 399.4,335.5 426.9,373.4 406.5,384.0" fill="#ff3cf0" stroke="none" stroke-width="1" opacity="0.95" />
<polygon points="404.0,371.0 423.0,366.0 426.9,373.4 406.5,384.0" fill="#b030b0" stroke="none" stroke-width="1" opacity="0.35" />
<polygon points="354.9,365.4 354.0,358.3 407.4,318.2 451.0,324.5 451.0,362.7 422.5,384.9" fill="none" stroke="#1622e6" stroke-width="1.7" opacity="1" stroke-linejoin="round"/>
<polyline points="422.5,345.8 422.5,384.9" fill="none" stroke="#1622e6" stroke-width="1.496" opacity="1" stroke-linejoin="round" />
<polyline points="422.5,345.8 451.0,324.5" fill="none" stroke="#1622e6" stroke-width="1.496" opacity="1" stroke-linejoin="round" />
<polyline points="422.5,345.8 383.4,338.5" fill="none" stroke="#1622e6" stroke-width="1.496" opacity="1" stroke-linejoin="round" />
<polyline points="383.0,338.0 451.0,362.7" fill="none" stroke="#1622e6" stroke-width="1.496" opacity="1" stroke-linejoin="round" />
<polyline points="407.4,318.2 408.0,338.0" fill="none" stroke="#1622e6" stroke-width="1.496" opacity="1" stroke-linejoin="round" />
<polygon points="370.0,347.4 405.6,326.6 403.3,322.7 367.7,343.5" fill="#5a60a8" stroke="#1622e6" stroke-width="1.5" opacity="0.97" stroke-linejoin="round"/>
<line x1="369.0" y1="345.7" x2="404.6" y2="324.9" stroke="#1622e6" stroke-width="1.1" opacity="1" />
<polygon points="408.0,326.5 407.4,320.0 467.9,283.6 498.1,288.0 498.1,323.6 474.1,343.1" fill="#4a52a8" stroke="none" stroke-width="1" opacity="0.52" />
<polygon points="467.9,283.6 498.1,288.0 498.1,301.5 468.3,297.0" fill="#20205c" stroke="none" stroke-width="1" opacity="0.34" />
<polygon points="436.7,304.9 451.0,300.5 477.6,338.7 461.6,345.8" fill="#e8e41c" stroke="none" stroke-width="1" opacity="0.95" />
<polygon points="458.0,331.0 473.0,326.0 477.6,338.7 461.6,345.8" fill="#a8a010" stroke="none" stroke-width="1" opacity="0.35" />
<polygon points="408.0,326.5 407.4,320.0 467.9,283.6 498.1,288.0 498.1,323.6 474.1,343.1" fill="none" stroke="#1622e6" stroke-width="1.7" opacity="1" stroke-linejoin="round"/>
<polyline points="474.1,303.1 474.1,343.1" fill="none" stroke="#1622e6" stroke-width="1.496" opacity="1" stroke-linejoin="round" />
<polyline points="474.1,303.1 498.1,288.0" fill="none" stroke="#1622e6" stroke-width="1.496" opacity="1" stroke-linejoin="round" />
<polyline points="474.1,303.1 437.0,297.5" fill="none" stroke="#1622e6" stroke-width="1.496" opacity="1" stroke-linejoin="round" />
<polyline points="437.0,298.0 498.1,323.6" fill="none" stroke="#1622e6" stroke-width="1.496" opacity="1" stroke-linejoin="round" />
<polyline points="467.9,283.6 468.5,300.0" fill="none" stroke="#1622e6" stroke-width="1.496" opacity="1" stroke-linejoin="round" />
<polygon points="422.3,307.5 456.1,290.0 454.1,286.2 420.3,303.7" fill="#5a60a8" stroke="#1622e6" stroke-width="1.5" opacity="0.97" stroke-linejoin="round"/>
<line x1="421.4" y1="305.9" x2="455.2" y2="288.4" stroke="#1622e6" stroke-width="1.1" opacity="1" />
<polygon points="480.9,272.5 480.0,267.2 521.8,254.7 541.4,256.5 541.6,289.4 518.3,306.7" fill="#4a52a8" stroke="none" stroke-width="1" opacity="0.52" />
<polygon points="521.8,254.7 541.4,256.5 518.3,272.5 500.5,269.0" fill="#20205c" stroke="none" stroke-width="1" opacity="0.34" />
<polygon points="491.0,270.0 500.5,266.0 521.0,302.0 508.0,308.0" fill="#18dcf4" stroke="none" stroke-width="1" opacity="0.95" />
<polygon points="480.9,272.5 480.0,267.2 521.8,254.7 541.4,256.5 541.6,289.4 518.3,306.7" fill="none" stroke="#1622e6" stroke-width="1.7" opacity="1" stroke-linejoin="round"/>
<polyline points="518.3,272.5 518.3,306.7" fill="none" stroke="#1622e6" stroke-width="1.496" opacity="1" stroke-linejoin="round" />
<polyline points="518.3,272.5 541.4,256.5" fill="none" stroke="#1622e6" stroke-width="1.496" opacity="1" stroke-linejoin="round" />
<polyline points="518.3,272.5 500.5,269.0" fill="none" stroke="#1622e6" stroke-width="1.496" opacity="1" stroke-linejoin="round" />
<polyline points="500.5,269.0 521.8,254.7" fill="none" stroke="#1622e6" stroke-width="1.496" opacity="1" stroke-linejoin="round" />
<polyline points="500.0,270.5 541.6,289.4" fill="none" stroke="#1622e6" stroke-width="1.496" opacity="1" stroke-linejoin="round" />
<polygon points="483.8,270.2 504.3,260.2 502.7,256.8 482.2,266.8" fill="#5a60a8" stroke="#1622e6" stroke-width="1.5" opacity="0.97" stroke-linejoin="round"/>
<line x1="483.1" y1="268.7" x2="503.6" y2="258.7" stroke="#1622e6" stroke-width="1.1" opacity="1" />
<polygon points="487.7,246.7 487.1,241.4 561.0,198.7 591.2,204.0 588.5,250.3 570.7,263.6" fill="#4a52a8" stroke="none" stroke-width="1" opacity="0.52" />
<polygon points="542.3,212.9 572.5,217.4 591.2,204.0 561.0,198.7" fill="#20205c" stroke="none" stroke-width="1" opacity="0.34" />
<polygon points="509.4,230.7 541.4,213.8 569.8,258.3 518.3,250.3" fill="#10d834" stroke="none" stroke-width="1" opacity="0.95" />
<polygon points="518.3,250.3 569.8,258.3 562.0,262.0 524.0,262.0" fill="#0aa82a" stroke="none" stroke-width="1" opacity="0.9" />
<polygon points="522.0,256.5 570.0,263.0 588.0,267.0 570.0,266.5" fill="#e02818" stroke="none" stroke-width="1" opacity="0.9" />
<polygon points="487.7,246.7 487.1,241.4 561.0,198.7 591.2,204.0 588.5,250.3 570.7,263.6" fill="none" stroke="#1622e6" stroke-width="1.7" opacity="1" stroke-linejoin="round"/>
<polyline points="572.5,217.4 570.7,263.6" fill="none" stroke="#1622e6" stroke-width="1.496" opacity="1" stroke-linejoin="round" />
<polyline points="572.5,217.4 591.2,204.0" fill="none" stroke="#1622e6" stroke-width="1.496" opacity="1" stroke-linejoin="round" />
<polyline points="572.5,217.4 542.3,212.9" fill="none" stroke="#1622e6" stroke-width="1.496" opacity="1" stroke-linejoin="round" />
<polyline points="542.3,212.9 561.0,198.7" fill="none" stroke="#1622e6" stroke-width="1.496" opacity="1" stroke-linejoin="round" />
<polygon points="498.1,236.1 550.1,206.1 547.5,201.6 495.5,231.6" fill="#5a60a8" stroke="#1622e6" stroke-width="1.5" opacity="0.97" stroke-linejoin="round"/>
<line x1="496.9" y1="234.1" x2="548.9" y2="204.1" stroke="#1622e6" stroke-width="1.1" opacity="1" />
<polygon points="181.9,532.2 181.9,535.7 218.6,552.3 262.5,516.8 261.3,499.0 226.9,497.8" fill="#4a52a8" stroke="none" stroke-width="1" opacity="0.46" />
<polygon points="181.9,532.2 181.9,535.7 218.6,552.3 262.5,516.8 261.3,499.0 226.9,497.8" fill="none" stroke="#1622e6" stroke-width="1.5" opacity="1" stroke-linejoin="round"/>
<polyline points="181.9,532.2 216.8,534.0" fill="none" stroke="#1622e6" stroke-width="1.32" opacity="1" stroke-linejoin="round" />
<polyline points="216.8,534.0 218.6,552.3" fill="none" stroke="#1622e6" stroke-width="1.32" opacity="1" stroke-linejoin="round" />
<polyline points="216.8,534.0 253.0,501.9 261.3,499.0" fill="none" stroke="#1622e6" stroke-width="1.32" opacity="1" stroke-linejoin="round" />
<polyline points="181.9,535.7 253.0,501.9" fill="none" stroke="#1622e6" stroke-width="1.32" opacity="1" stroke-linejoin="round" />
<rect x="212.9" y="498.1" width="25.6" height="11.2" rx="4.2" fill="#1a34e6" stroke="#0c1ed0" stroke-width="1.1" transform="rotate(-12 225.7 503.7)"/>
<rect x="216.7" y="499.2" width="16.6" height="3.4" rx="1" fill="#3a3c78" opacity="0.7" transform="rotate(-12 225.7 503.7)"/>
<rect x="201.1" y="510.0" width="25.6" height="11.2" rx="4.2" fill="#1a34e6" stroke="#0c1ed0" stroke-width="1.1" transform="rotate(-12 213.9 515.6)"/>
<rect x="204.9" y="511.1" width="16.6" height="3.4" rx="1" fill="#3a3c78" opacity="0.7" transform="rotate(-12 213.9 515.6)"/>
<polygon points="237.3,492.0 237.3,495.5 273.3,508.7 312.0,476.7 310.7,456.7 282.7,456.7" fill="#4a52a8" stroke="none" stroke-width="1" opacity="0.46" />
<polygon points="237.3,492.0 237.3,495.5 273.3,508.7 312.0,476.7 310.7,456.7 282.7,456.7" fill="none" stroke="#1622e6" stroke-width="1.5" opacity="1" stroke-linejoin="round"/>
<polyline points="237.3,492.0 272.0,490.0" fill="none" stroke="#1622e6" stroke-width="1.32" opacity="1" stroke-linejoin="round" />
<polyline points="272.0,490.0 273.3,508.7" fill="none" stroke="#1622e6" stroke-width="1.32" opacity="1" stroke-linejoin="round" />
<polyline points="272.0,490.0 300.0,460.7 310.7,456.7" fill="none" stroke="#1622e6" stroke-width="1.32" opacity="1" stroke-linejoin="round" />
<polyline points="237.3,495.5 300.0,460.7" fill="none" stroke="#1622e6" stroke-width="1.32" opacity="1" stroke-linejoin="round" />
<rect x="264.5" y="457.7" width="25.6" height="11.2" rx="4.2" fill="#1a34e6" stroke="#0c1ed0" stroke-width="1.1" transform="rotate(-12 277.3 463.3)"/>
<rect x="268.3" y="458.8" width="16.6" height="3.4" rx="1" fill="#3a3c78" opacity="0.7" transform="rotate(-12 277.3 463.3)"/>
<rect x="250.7" y="467.6" width="25.6" height="11.2" rx="4.2" fill="#1a34e6" stroke="#0c1ed0" stroke-width="1.1" transform="rotate(-12 263.5 473.2)"/>
<rect x="254.5" y="468.7" width="16.6" height="3.4" rx="1" fill="#3a3c78" opacity="0.7" transform="rotate(-12 263.5 473.2)"/>
<polygon points="308.0,450.7 308.0,454.0 329.3,462.7 350.7,444.0 349.9,434.7 329.3,432.3" fill="#4a52a8" stroke="none" stroke-width="1" opacity="0.46" />
<polygon points="308.0,450.7 308.0,454.0 329.3,462.7 350.7,444.0 349.9,434.7 329.3,432.3" fill="none" stroke="#1622e6" stroke-width="1.5" opacity="1" stroke-linejoin="round"/>
<polyline points="308.0,450.7 329.3,450.7" fill="none" stroke="#1622e6" stroke-width="1.32" opacity="1" stroke-linejoin="round" />
<polyline points="329.3,450.7 329.3,462.7" fill="none" stroke="#1622e6" stroke-width="1.32" opacity="1" stroke-linejoin="round" />
<polyline points="329.3,450.7 343.0,436.0 349.9,434.7" fill="none" stroke="#1622e6" stroke-width="1.32" opacity="1" stroke-linejoin="round" />
<polyline points="308.0,454.0 343.0,436.0" fill="none" stroke="#1622e6" stroke-width="1.32" opacity="1" stroke-linejoin="round" />
<rect x="321.0" y="432.3" width="16.6" height="7.4" rx="2.8" fill="#1a34e6" stroke="#0c1ed0" stroke-width="1.1" transform="rotate(-12 329.3 436.0)"/>
<rect x="323.5" y="433.0" width="10.8" height="2.2" rx="1" fill="#3a3c78" opacity="0.7" transform="rotate(-12 329.3 436.0)"/>
<rect x="312.2" y="437.8" width="16.6" height="7.4" rx="2.8" fill="#1a34e6" stroke="#0c1ed0" stroke-width="1.1" transform="rotate(-12 320.5 441.5)"/>
<rect x="314.7" y="438.5" width="10.8" height="2.2" rx="1" fill="#3a3c78" opacity="0.7" transform="rotate(-12 320.5 441.5)"/>
<polygon points="302.7,408.9 303.3,416.0 360.2,436.1 401.1,402.9 399.4,376.3 342.4,376.9" fill="#4a52a8" stroke="none" stroke-width="1" opacity="0.46" />
<polygon points="302.7,408.9 303.3,416.0 360.2,436.1 401.1,402.9 399.4,376.3 342.4,376.9" fill="none" stroke="#1622e6" stroke-width="1.6" opacity="1" stroke-linejoin="round"/>
<polyline points="302.7,408.9 359.6,406.5" fill="none" stroke="#1622e6" stroke-width="1.4080000000000001" opacity="1" stroke-linejoin="round" />
<polyline points="359.6,406.5 360.2,436.1" fill="none" stroke="#1622e6" stroke-width="1.4080000000000001" opacity="1" stroke-linejoin="round" />
<polyline points="359.6,406.5 399.4,376.3" fill="none" stroke="#1622e6" stroke-width="1.4080000000000001" opacity="1" stroke-linejoin="round" />
<polyline points="303.3,416.0 366.0,393.5 401.1,402.9" fill="none" stroke="#1622e6" stroke-width="1.4080000000000001" opacity="1" stroke-linejoin="round" />
<rect x="334.3" y="377.6" width="46.0" height="8.5" rx="3.0" fill="#1a30e8" stroke="#0c1cd0" stroke-width="1.2" transform="rotate(-9 357.3 381.8)"/>
<rect x="337.3" y="378.6" width="32.0" height="2.7" rx="1" fill="#3a3c78" opacity="0.75" transform="rotate(-9 357.3 381.8)"/>
<rect x="318.0" y="390.7" width="44.0" height="9.0" rx="3.1" fill="#1a30e8" stroke="#0c1cd0" stroke-width="1.2" transform="rotate(-11 340.0 395.2)"/>
<rect x="321.0" y="391.7" width="30.0" height="2.9" rx="1" fill="#3a3c78" opacity="0.75" transform="rotate(-11 340.0 395.2)"/>
<circle cx="367.5" cy="384.5" r="0.9" fill="#111"/><circle cx="353" cy="397.5" r="0.9" fill="#111"/>
<polyline points="217.4,522.7 221.0,531.0 231.7,538.1 236.4,535.7" fill="none" stroke="#e8a020" stroke-width="2.6" opacity="0.9" stroke-linejoin="round" />
<line x1="226.9" y1="513.2" x2="231.7" y2="526.2" stroke="#1030e0" stroke-width="1.8" opacity="1" />
<polygon points="230.5,526.2 236.4,529.8 245.9,534.5 241.1,535.7 234.0,532.2" fill="#e8241c" stroke="none" stroke-width="1" opacity="0.92" />
<polygon points="245.9,535.7 253.0,541.7 252.5,551.0 245.9,556.5 241.1,550.0" fill="#e8241c" stroke="none" stroke-width="1" opacity="0.88" />
<polygon points="234.0,540.5 245.9,535.7 248.3,539.3 240.0,546.4" fill="#f0b428" stroke="none" stroke-width="1" opacity="0.92" />
<polyline points="270.0,480.7 274.4,488.9 286.3,494.8 293.7,493.3" fill="none" stroke="#e8a020" stroke-width="2.6" opacity="0.9" stroke-linejoin="round" />
<line x1="280.4" y1="473.3" x2="282.6" y2="484.4" stroke="#10d030" stroke-width="1.8" opacity="1" />
<polygon points="283.3,485.2 293.7,491.1 304.1,499.3 302.6,508.1 295.2,513.3 289.3,502.2" fill="#e8241c" stroke="none" stroke-width="1" opacity="0.9" />
<polygon points="285.5,498.5 296.7,493.8 299.0,497.0 290.0,502.5" fill="#f0b428" stroke="none" stroke-width="1" opacity="0.92" />
<line x1="331.9" y1="445.9" x2="336.3" y2="453.3" stroke="#10d8e8" stroke-width="2.6" opacity="1" />
<line x1="340.0" y1="452.6" x2="348.9" y2="457.0" stroke="#10d8e8" stroke-width="2" opacity="1" />
<polygon points="333.3,462.2 348.9,458.5 354.8,460.7 348.9,463.7 343.0,477.0 337.0,469.6" fill="#e8a020" stroke="none" stroke-width="1" opacity="0.85" />
<line x1="328.0" y1="455.0" x2="334.0" y2="462.0" stroke="#e8a020" stroke-width="2" opacity="0.9" />
<line x1="360.7" y1="400.0" x2="365.2" y2="408.9" stroke="#8a20a8" stroke-width="2.6" opacity="1" />
<polyline points="346.5,403.0 351.9,417.8 358.0,426.0" fill="none" stroke="#e8a020" stroke-width="2.8" opacity="0.9" stroke-linejoin="round" />
<polygon points="351.9,417.8 366.7,420.0 383.0,423.7 397.8,428.1 405.2,444.4 403.7,450.4 388.9,447.4 365.2,440.0 356.3,429.6" fill="#d8a030" stroke="none" stroke-width="1" opacity="0.72" />
<polygon points="363.7,405.9 369.6,408.9 383.0,416.3 388.9,420.7 383.0,423.7 366.7,419.3" fill="#e8241c" stroke="none" stroke-width="1" opacity="0.92" />
<polygon points="671.0,178.0 690.0,181.0 832.0,206.0 822.0,226.0 700.0,192.0" fill="url(#gfan)"/>
<line x1="672.0" y1="179.0" x2="779.0" y2="216.0" stroke="#e83020" stroke-width="1.1" opacity="0.9" />
<line x1="672.0" y1="181.0" x2="740.0" y2="196.0" stroke="#f0a030" stroke-width="1.5" opacity="0.6" />
<line x1="640.6" y1="197.1" x2="702.1" y2="207.4" stroke="#e8e020" stroke-width="1.6" opacity="0.95" />
<line x1="615.4" y1="222.3" x2="671.7" y2="231.9" stroke="#e8e020" stroke-width="1.6" opacity="0.95" />
<polyline points="642.1,199.3 663.6,217.1 673.9,223.0" fill="none" stroke="#e03028" stroke-width="1.0" opacity="0.9" stroke-linejoin="round" />
<polyline points="616.9,225.2 635.4,238.6 647.2,240.8 668.0,233.4" fill="none" stroke="#e03028" stroke-width="1.0" opacity="0.9" stroke-linejoin="round" />
<polyline points="702.1,209.7 681.3,216.3 673.9,223.0" fill="none" stroke="#e03028" stroke-width="1.0" opacity="0.9" stroke-linejoin="round" />
<polyline points="668.0,233.4 654.7,238.6 644.3,243.7 633.9,246.7" fill="none" stroke="#e8d020" stroke-width="1.4" opacity="0.9" stroke-linejoin="round" />
<polyline points="700.6,208.9 688.7,214.8 681.3,220.0" fill="none" stroke="#e8d020" stroke-width="1.2" opacity="0.9" stroke-linejoin="round" />
<polygon points="645.8,174.1 656.1,168.2 673.9,160.0 682.1,158.5 682.8,169.6 668.7,183.0 646.5,177.8" fill="#4a52a8" stroke="none" stroke-width="1" opacity="0.45" />
<polygon points="645.8,174.1 656.1,168.2 673.9,160.0 682.1,158.5 682.8,169.6 668.7,183.0 646.5,177.8" fill="none" stroke="#1622e6" stroke-width="1.2" opacity="1" stroke-linejoin="round"/>
<polyline points="656.1,168.2 669.5,170.4 682.1,159.0" fill="none" stroke="#1622e6" stroke-width="1.0" opacity="1" stroke-linejoin="round" />
<polyline points="669.5,170.4 668.7,183.0" fill="none" stroke="#1622e6" stroke-width="1.0" opacity="1" stroke-linejoin="round" />
<polyline points="645.8,174.1 669.5,170.4" fill="none" stroke="#1622e6" stroke-width="1.0" opacity="1" stroke-linejoin="round" />
<polygon points="621.3,196.3 633.9,184.5 650.2,181.5 653.9,184.5 652.4,193.4 641.3,203.0 622.1,199.3" fill="#4a52a8" stroke="none" stroke-width="1" opacity="0.45" />
<polygon points="621.3,196.3 633.9,184.5 650.2,181.5 653.9,184.5 652.4,193.4 641.3,203.0 622.1,199.3" fill="none" stroke="#1622e6" stroke-width="1.2" opacity="1" stroke-linejoin="round"/>
<polyline points="633.9,184.5 640.6,191.1 653.5,184.5" fill="none" stroke="#1622e6" stroke-width="1.0" opacity="1" stroke-linejoin="round" />
<polyline points="640.6,191.1 641.3,203.0" fill="none" stroke="#1622e6" stroke-width="1.0" opacity="1" stroke-linejoin="round" />
<polyline points="621.3,196.3 640.6,191.1" fill="none" stroke="#1622e6" stroke-width="1.0" opacity="1" stroke-linejoin="round" />
<polygon points="594.6,220.0 605.7,209.7 624.3,205.2 628.0,208.2 627.2,215.6 614.6,227.4 595.4,223.7" fill="#4a52a8" stroke="none" stroke-width="1" opacity="0.45" />
<polygon points="594.6,220.0 605.7,209.7 624.3,205.2 628.0,208.2 627.2,215.6 614.6,227.4 595.4,223.7" fill="none" stroke="#1622e6" stroke-width="1.2" opacity="1" stroke-linejoin="round"/>
<polyline points="605.7,209.7 614.6,215.6 628.0,207.9" fill="none" stroke="#1622e6" stroke-width="1.0" opacity="1" stroke-linejoin="round" />
<polyline points="614.6,215.6 614.6,227.4" fill="none" stroke="#1622e6" stroke-width="1.0" opacity="1" stroke-linejoin="round" />
<polyline points="594.6,220.0 614.6,215.6" fill="none" stroke="#1622e6" stroke-width="1.0" opacity="1" stroke-linejoin="round" />
<polygon points="687.3,208.2 697.6,191.1 703.6,190.4 719.1,199.3 718.4,206.0 708.0,216.3 688.0,212.6" fill="#4a52a8" stroke="none" stroke-width="1" opacity="0.45" />
<polygon points="687.3,208.2 697.6,191.1 703.6,190.4 719.1,199.3 718.4,206.0 708.0,216.3 688.0,212.6" fill="none" stroke="#1622e6" stroke-width="1.2" opacity="1" stroke-linejoin="round"/>
<polyline points="697.6,191.1 708.0,203.7 719.1,199.6" fill="none" stroke="#1622e6" stroke-width="1.0" opacity="1" stroke-linejoin="round" />
<polyline points="708.0,203.7 708.0,216.3" fill="none" stroke="#1622e6" stroke-width="1.0" opacity="1" stroke-linejoin="round" />
<polyline points="687.3,208.2 708.0,203.7" fill="none" stroke="#1622e6" stroke-width="1.0" opacity="1" stroke-linejoin="round" />
<polygon points="656.9,230.4 662.1,214.1 672.4,212.6 690.2,223.7 688.7,230.4 679.9,239.3 657.6,236.3" fill="#4a52a8" stroke="none" stroke-width="1" opacity="0.45" />
<polygon points="656.9,230.4 662.1,214.1 672.4,212.6 690.2,223.7 688.7,230.4 679.9,239.3 657.6,236.3" fill="none" stroke="#1622e6" stroke-width="1.2" opacity="1" stroke-linejoin="round"/>
<polyline points="662.1,214.1 679.9,227.4 690.2,224.0" fill="none" stroke="#1622e6" stroke-width="1.0" opacity="1" stroke-linejoin="round" />
<polyline points="679.9,227.4 679.9,239.3" fill="none" stroke="#1622e6" stroke-width="1.0" opacity="1" stroke-linejoin="round" />
<polyline points="656.9,230.4 679.9,227.4" fill="none" stroke="#1622e6" stroke-width="1.0" opacity="1" stroke-linejoin="round" />
<polyline points="664.3,168.2 666.5,175.6 672.4,179.3" fill="none" stroke="#f09a30" stroke-width="1.6" opacity="0.9" stroke-linejoin="round" />
<polyline points="638.1,191.9 640.1,197.1" fill="none" stroke="#e8d020" stroke-width="1.6" opacity="0.9" stroke-linejoin="round" />
<polyline points="610.9,216.3 613.9,222.3" fill="none" stroke="#f0b040" stroke-width="1.6" opacity="0.9" stroke-linejoin="round" />
<polygon points="653.5,160.0 668.0,155.6 671.0,162.2 656.1,167.4" fill="#3a3a40" stroke="#111" stroke-width="1.4" opacity="1" stroke-linejoin="round"/>
<polygon points="655.8,160.7 667.3,157.5 668.7,161.9 657.6,165.5" fill="#55565e" stroke="#111" stroke-width="0.6" opacity="1" />
<circle cx="636.4" cy="185.9" r="2.3" fill="#15151a"/>
<polygon points="605.5,204.0 611.7,203.0 613.2,208.9 606.9,210.8" fill="#2a2a30" stroke="#111" stroke-width="1" opacity="1" stroke-linejoin="round"/>
<circle cx="705.8" cy="198.2" r="2.4" fill="#15151a"/>
<polygon points="672.4,217.8 679.9,216.3 681.3,223.0 673.9,225.2" fill="#2a2a30" stroke="#111" stroke-width="1" opacity="1" stroke-linejoin="round"/>
<polygon points="674.2,219.3 678.7,218.6 679.6,222.3 675.1,223.3" fill="#77787e" stroke="none" stroke-width="1" opacity="1" /></g></svg><div style="left:0;top:119px;width:1px;height:540px;background:#8c8c8c"></div><div style="left:931px;top:119px;width:17.500px;height:538px;background:#fff;border:1px solid #d6d6d6"></div><svg style="left:933.5px;top:122.0px;overflow:visible" width="11" height="11" viewBox="0 0 11 11"><rect x="-1.5" y="-1.5" width="14" height="14" rx="1" fill="#fbd45c" stroke="#c89820" stroke-width="0.8"/><path d="M5.5 0.500l5 2.500v5.500l-5 2.500-5-2.500V3z" fill="#18a0b8" stroke="#0c5870" stroke-width="0.700"/><path d="M5.500 0.500l5 2.500-5 2.500-5-2.500z" fill="#58d0e0"/><path d="M5.500 5.500v5.500l5-2.500V3z" fill="#0c7088"/></svg><svg style="left:933.5px;top:136.0px;overflow:visible" width="11" height="11" viewBox="0 0 11 11"><path d="M5.500 0.500l5 2.500v5.500l-5 2.500-5-2.500V3z" fill="#fff" stroke="#333" stroke-width="0.800"/><path d="M0.500 3l5 2.500 5-2.500M5.500 5.500v5.500" fill="none" stroke="#333" stroke-width="0.700"/></svg><svg style="left:933.5px;top:149.5px;overflow:visible" width="11" height="11" viewBox="0 0 11 11"><path d="M5.500 0.500l5 2.500v5.500l-5 2.500-5-2.500V3z" fill="#fff" stroke="#333" stroke-width="0.800"/><path d="M0.500 3l5 2.500 5-2.500M5.500 5.500v5.500" fill="none" stroke="#333" stroke-width="0.700"/></svg><svg style="left:933.5px;top:175.5px;overflow:visible" width="11" height="11" viewBox="0 0 11 11"><path d="M0.500 3.500l3-3h7v7l-3 3h-7z" fill="#e8f0fc" stroke="#2c4c8c" stroke-width="0.800"/><path d="M0.500 3.500l3-3h7l-3 3z" fill="#a8c4ec" stroke="#2c4c8c" stroke-width="0.500"/><path d="M7.500 3.500l3-3v7l-3 3z" fill="#c8dcf4" stroke="#2c4c8c" stroke-width="0.500"/></svg><svg style="left:933.5px;top:188.5px;overflow:visible" width="11" height="11" viewBox="0 0 11 11"><path d="M0.500 3.500l3-3h7v7l-3 3h-7z" fill="#2c64b4" stroke="#2c4c8c" stroke-width="0.800"/><path d="M0.500 3.500l3-3h7l-3 3z" fill="#5c94dc" stroke="#2c4c8c" stroke-width="0.500"/><path d="M7.500 3.500l3-3v7l-3 3z" fill="#1c447c" stroke="#2c4c8c" stroke-width="0.500"/></svg><svg style="left:933.5px;top:202.0px;overflow:visible" width="11" height="11" viewBox="0 0 11 11"><path d="M0.500 3.500l3-3h7v7l-3 3h-7z" fill="#2c64b4" stroke="#2c4c8c" stroke-width="0.800"/><path d="M0.500 3.500l3-3h7l-3 3z" fill="#e8f0fc" stroke="#2c4c8c" stroke-width="0.500"/><path d="M7.500 3.500l3-3v7l-3 3z" fill="#1c447c" stroke="#2c4c8c" stroke-width="0.500"/></svg><svg style="left:933.5px;top:215.3px;overflow:visible" width="11" height="11" viewBox="0 0 11 11"><path d="M0.500 3.500l3-3h7v7l-3 3h-7z" fill="#e8f0fc" stroke="#2c4c8c" stroke-width="0.800"/><path d="M0.500 3.500l3-3h7l-3 3z" fill="#2c64b4" stroke="#2c4c8c" stroke-width="0.500"/><path d="M7.500 3.500l3-3v7l-3 3z" fill="#c8dcf4" stroke="#2c4c8c" stroke-width="0.500"/></svg><svg style="left:933.5px;top:228.5px;overflow:visible" width="11" height="11" viewBox="0 0 11 11"><path d="M0.500 3.500l3-3h7v7l-3 3h-7z" fill="#c8dcf4" stroke="#2c4c8c" stroke-width="0.800"/><path d="M0.500 3.500l3-3h7l-3 3z" fill="#e8f0fc" stroke="#2c4c8c" stroke-width="0.500"/><path d="M7.500 3.500l3-3v7l-3 3z" fill="#2c64b4" stroke="#2c4c8c" stroke-width="0.500"/></svg><svg style="left:933.5px;top:242.0px;overflow:visible" width="11" height="11" viewBox="0 0 11 11"><path d="M0.500 3.500l3-3h7v7l-3 3h-7z" fill="#2c64b4" stroke="#2c4c8c" stroke-width="0.800"/><path d="M0.500 3.500l3-3h7l-3 3z" fill="#e8f0fc" stroke="#2c4c8c" stroke-width="0.500"/><path d="M7.500 3.500l3-3v7l-3 3z" fill="#a8c4ec" stroke="#2c4c8c" stroke-width="0.500"/></svg><svg style="left:933.5px;top:255.3px;overflow:visible" width="11" height="11" viewBox="0 0 11 11"><path d="M0.500 3.500l3-3h7v7l-3 3h-7z" fill="#e8f0fc" stroke="#2c4c8c" stroke-width="0.800"/><path d="M0.500 3.500l3-3h7l-3 3z" fill="#a8c4ec" stroke="#2c4c8c" stroke-width="0.500"/><path d="M7.500 3.500l3-3v7l-3 3z" fill="#2c64b4" stroke="#2c4c8c" stroke-width="0.500"/></svg><svg style="left:933.5px;top:281.1px;overflow:visible" width="11" height="11" viewBox="0 0 11 11"><path d="M1 2.500h9.500M1 5.500h9.500M1 8.500h9.500M2.500 1v9.500M5.500 1v9.500M8.500 1v9.500" stroke="#7c9cc8" stroke-width="1"/></svg><svg style="left:933.5px;top:294.0px;overflow:visible" width="11" height="11" viewBox="0 0 11 11"><path d="M5.5 0.500l5 2.500v5.500l-5 2.500-5-2.500V3z" fill="#18a0b8" stroke="#0c5870" stroke-width="0.700"/><path d="M5.500 0.500l5 2.500-5 2.500-5-2.500z" fill="#58d0e0"/><path d="M5.500 5.500v5.500l5-2.500V3z" fill="#0c7088"/></svg><svg style="left:933.5px;top:307.5px;overflow:visible" width="11" height="11" viewBox="0 0 11 11"><path d="M5.5 0.500l5 2.500v5.500l-5 2.500-5-2.500V3z" fill="#18a0b8" stroke="#0c5870" stroke-width="0.700"/><path d="M5.500 0.500l5 2.500-5 2.500-5-2.500z" fill="#58d0e0"/><path d="M5.500 5.500v5.500l5-2.500V3z" fill="#0c7088"/></svg><svg style="left:864px;top:130px" width="64" height="58" viewBox="864 130 64 58">
<ellipse cx="895.3" cy="167.5" rx="23" ry="11.2" fill="none" stroke="#c6c6c6" stroke-width="3.8"/>
<path d="M879.2 146.3L892.1 139l19.200 4.100-1.500 18.700L901 173.700l-20.300-8.800z" fill="#333"/>
<path d="M879.200 146.300L892.100 139l19.200 4.100-9.800 7.800z" fill="#4a4a4a" stroke="#1a1a1a" stroke-width="0.700" stroke-linejoin="round"/>
<path d="M901.500 150.900l9.800-7.800-1.500 18.700L901 173.700z" fill="#3c3c3c" stroke="#1a1a1a" stroke-width="0.700" stroke-linejoin="round"/>
<path d="M879.200 146.300l22.300 4.600-.5 22.800-20.300-8.800z" fill="#303030" stroke="#1a1a1a" stroke-width="0.700" stroke-linejoin="round"/>
<text x="890.300" y="162.300" font-family="Liberation Sans,sans-serif" font-weight="bold" font-size="5" fill="#e4e4e4" text-anchor="middle" transform="rotate(14 890.300 160.500)">FRONT</text>
<text x="895" y="145.800" font-family="Liberation Sans,sans-serif" font-size="3.200" fill="#ccc" text-anchor="middle" transform="rotate(8 895 145)">TOP</text>
<text x="906" y="160" font-family="Liberation Sans,sans-serif" font-size="3.200" fill="#ccc" text-anchor="middle" transform="rotate(-62 906 159)">RIGHT</text>
<text x="881.300" y="179.500" font-family="Liberation Sans,sans-serif" font-size="7.500" fill="#222" text-anchor="middle" transform="rotate(-22 881.300 177)">S</text>
<text x="918" y="172" font-family="Liberation Sans,sans-serif" font-size="6" fill="#333" text-anchor="middle" transform="rotate(-28 918 170)">E</text>
<text x="876.600" y="158" font-family="Liberation Sans,sans-serif" font-size="4" fill="#444" text-anchor="middle" transform="rotate(30 876.600 156)">W</text>
</svg><svg style="left:16px;top:598px" width="44" height="44" viewBox="16 598 44 44">
<path d="M28.700 628v-10" stroke="#f0501c" stroke-width="2.400"/><path d="M28.700 609.800l-3.200 9.700h6.400z" fill="#f0481a"/>
<path d="M29 628l5-4.500" stroke="#444" stroke-width="2.200"/><path d="M39.200 618.600l-7.300 3 4.200 4.300z" fill="#3a3a3a"/>
<path d="M29 628.800l10 2.400" stroke="#555" stroke-width="2.200"/><path d="M46.600 633.200l-8.200-4.600-1.300 5.600z" fill="#444"/>
<circle cx="28.700" cy="628.700" r="2.600" fill="#4a5058"/>
<text x="31.300" y="606.600" font-family="Liberation Sans,sans-serif" font-size="5.500" fill="#444" text-anchor="middle">Y</text>
<text x="41.800" y="616.200" font-family="Liberation Sans,sans-serif" font-size="5.500" fill="#444" text-anchor="middle">Z</text>
<text x="50" y="631.600" font-family="Liberation Sans,sans-serif" font-size="5.500" fill="#444" text-anchor="middle">X</text>
</svg></div><div id="panel"><div style="left:0;top:0;width:211px;height:15.500px;background:linear-gradient(#c4c6ee,#d2d3f6)"></div><i style="left:1.500px;top:3px;width:10px;height:9px;background:#4455b8;color:#fff;font-size:6px;font-style:normal;font-weight:bold;line-height:9px;text-align:center;border-radius:1px">PA</i><b style="left:13.3px;top:2.5px;font-size:8px;line-height:10px;color:#111;transform:scaleX(0.872);transform-origin:0 0;">A25_4DL5X12_DN70L_P1R17</b><svg style="left:200px;top:1.500px" width="10" height="13" viewBox="0 0 10 13"><circle cx="5" cy="5" r="4" fill="#e8f4fc" stroke="#a8c4dc" stroke-width="0.800"/><rect x="3.300" y="9" width="3.400" height="3" fill="#a8b4c4"/></svg><div style="left:2.5px;top:17.500px;width:12.500px;height:12.500px;background:#f8d048;border:1px solid #d0a020"></div><svg style="left:3px;top:18px" width="11.5" height="11.500" viewBox="0 0 11.5 11.500"><path d="M1 3h9M1 9.500h9M2 3c2 2 2 4.500 0 6.500M9 3L5.500 9.500" stroke="#2a4ca8" stroke-width="1" fill="none"/><path d="M2 1l3 1.500" stroke="#444" stroke-width="0.900"/></svg><div style="left:20.0px;top:17.500px;width:12.500px;height:12.500px;background:#f8d048;border:1px solid #d0a020"></div><svg style="left:20.5px;top:18px" width="11.5" height="11.500" viewBox="0 0 11.5 11.500"><path d="M1 9l7-4.500v4.500z" fill="#d8e4f4" stroke="#2a4ca8" stroke-width="0.800"/><path d="M3 2l5 5M5 1l2 5" stroke="#e07820" stroke-width="0.900"/></svg><div style="left:33.0px;top:17.500px;width:12.500px;height:12.500px;background:#f2f3ff"></div><svg style="left:33.5px;top:18px" width="11.5" height="11.500" viewBox="0 0 11.5 11.500"><path d="M1 9l8-4.500v4.500z" fill="#e8f0fc" stroke="#2a4ca8" stroke-width="0.800"/><path d="M1 6l6-3" stroke="#6a8ccc" stroke-width="0.800"/></svg><div style="left:46.5px;top:17.500px;width:12.500px;height:12.500px;background:#f2f3ff"></div><svg style="left:47px;top:18px" width="11.5" height="11.500" viewBox="0 0 11.5 11.500"><path d="M2 9.500V5l4-2.500 3.500 2v5z" fill="#b8d0f0" stroke="#2a4ca8" stroke-width="0.800"/><path d="M1 4l4-3 2 1" stroke="#2a4ca8" stroke-width="0.900" fill="none"/></svg><div style="left:64.0px;top:17.500px;width:12.500px;height:12.500px;background:#f2f3ff"></div><svg style="left:64.5px;top:18px" width="11.5" height="11.500" viewBox="0 0 11.5 11.500"><path d="M1 9.500l2-5 6-2.500v7.500z" fill="#a8d8c8" stroke="#2a6c9c" stroke-width="0.800"/><path d="M1 9.500h9" stroke="#2a4ca8" stroke-width="0.900"/></svg><div style="left:77.0px;top:17.500px;width:12.500px;height:12.500px;background:#f8d048;border:1px solid #d0a020"></div><svg style="left:77.5px;top:18px" width="11.5" height="11.500" viewBox="0 0 11.5 11.500"><path d="M1 9.500l2-4 6-2v6z" fill="#f8e8a0" stroke="#2a4ca8" stroke-width="0.800"/><path d="M0.500 9.500h10M9.500 4l1.500 2" stroke="#2a4ca8" stroke-width="0.900"/></svg><div style="left:94.0px;top:17.500px;width:12.500px;height:12.500px;background:#f2f3ff"></div><svg style="left:94.5px;top:18px" width="11.5" height="11.500" viewBox="0 0 11.5 11.500"><path d="M5 1.500L1 9.500h4zM6.500 1.500l4 8h-4z" fill="#555" stroke="#222" stroke-width="0.700"/></svg><svg style="left:106.5px;top:18px" width="16" height="11.500" viewBox="0 0 16 11.500"><rect x="0" y="1" width="16" height="10" fill="#c8c8c8" opacity="0.900"/><path d="M2 4h3" stroke="#888" stroke-width="1"/></svg><svg style="left:150.500px;top:17px" width="9" height="13" viewBox="0 0 9 13"><path d="M0.700 0.700v9.500l2.300-2 1.700 3.600 1.500-.7-1.700-3.500h3z" fill="#fff" stroke="#222" stroke-width="0.800"/></svg><svg style="top:33.1px;left:2px" viewBox="0 0 9.500 9" width="9.500" height="9"><path d="M0.500 1.800h7" stroke="#1c3c8c" stroke-width="1.600"/><path d="M7.300 2.300L1 7.300h6.500" stroke="#4c94d8" stroke-width="1.100" fill="none"/></svg><div class="sl" style="top:35.6px"><i style="width:66.4px"></i></div><div class="kn" style="left:77.2px;top:33.300000000000004px"></div><div class="pv" style="top:33.1px">-20.00</div><i style="left:166px;top:37.1px;border:1.500px solid transparent;border-top:2px solid #444;width:0;height:0"></i><i style="left:192px;top:35.1px;border:1.500px solid transparent;border-bottom:2px solid #444;width:0;height:0"></i><span class="un" style="top:33.1px">mm</span><svg style="top:44.1px;left:2px" viewBox="0 0 9.500 9" width="9.500" height="9"><path d="M0.500 7.500L6 3.500v4zM0.500 7.500h6" stroke="#2c58b8" stroke-width="0.900" fill="#b8ccec"/><path d="M8 1v7.500" stroke="#1a3470" stroke-width="1.100"/></svg><div class="sl" style="top:46.6px"><i style="width:73px"></i></div><div class="kn" style="left:83.8px;top:44.300000000000004px"></div><div class="pv" style="top:44.1px">0.00</div><i style="left:166px;top:48.1px;border:1.500px solid transparent;border-top:2px solid #444;width:0;height:0"></i><i style="left:192px;top:46.1px;border:1.500px solid transparent;border-bottom:2px solid #444;width:0;height:0"></i><span class="un" style="top:44.1px">mm</span><svg style="top:55.3px;left:2px" viewBox="0 0 9.500 9" width="9.500" height="9"><rect x="0.500" y="2.500" width="4.500" height="4" fill="#dce8f8" stroke="#2c58b8" stroke-width="0.900"/><path d="M7.500 0.500v8M6 2l1.500-1.500L9 2M6 7l1.500 1.500L9 7" stroke="#1a3470" stroke-width="0.900" fill="none"/></svg><div class="sl" style="top:57.8px"><i style="width:118px"></i></div><div class="kn" style="left:128.8px;top:55.5px"></div><div class="pv" style="top:55.3px">125.00</div><i style="left:166px;top:59.3px;border:1.500px solid transparent;border-top:2px solid #444;width:0;height:0"></i><i style="left:192px;top:57.3px;border:1.500px solid transparent;border-bottom:2px solid #444;width:0;height:0"></i><span class="un" style="top:55.3px">mm</span><svg style="top:66.4px;left:2px" viewBox="0 0 9.500 9" width="9.500" height="9"><rect x="0.500" y="2.500" width="4.500" height="4" fill="#dce8f8" stroke="#2c58b8" stroke-width="0.900"/><path d="M7.500 0.500v8M6 2l1.500-1.500L9 2M6 7l1.500 1.500L9 7" stroke="#1a3470" stroke-width="0.900" fill="none"/></svg><div class="sl" style="top:68.9px"><i style="width:73px"></i></div><div class="kn" style="left:83.8px;top:66.60000000000001px"></div><div class="pv" style="top:66.4px">0.00</div><i style="left:166px;top:70.4px;border:1.500px solid transparent;border-top:2px solid #444;width:0;height:0"></i><i style="left:192px;top:68.4px;border:1.500px solid transparent;border-bottom:2px solid #444;width:0;height:0"></i><span class="un" style="top:66.4px">°</span><svg style="top:77.4px;left:2px" viewBox="0 0 9.500 9" width="9.500" height="9"><rect x="0.500" y="2.500" width="4.500" height="4" fill="#dce8f8" stroke="#2c58b8" stroke-width="0.900"/><path d="M7.500 0.500v8M6 2l1.500-1.500L9 2M6 7l1.500 1.500L9 7" stroke="#1a3470" stroke-width="0.900" fill="none"/></svg><div class="sl" style="top:79.9px"><i style="width:73.6px"></i></div><div class="kn" style="left:84.39999999999999px;top:77.60000000000001px"></div><div class="pv" style="top:77.4px">0.00</div><i style="left:166px;top:81.4px;border:1.500px solid transparent;border-top:2px solid #444;width:0;height:0"></i><i style="left:192px;top:79.4px;border:1.500px solid transparent;border-bottom:2px solid #444;width:0;height:0"></i><span class="un" style="top:77.4px">°</span><div style="left:2.500px;top:89.500px;width:205px;height:11.500px;background:linear-gradient(#e4e4e4,#cfcfcf);border:1px solid #6c6c6c"></div>
<div style="left:2.500px;top:101px;width:205px;height:12.500px;background:linear-gradient(#e8e8ee,#d4d4dc);border:1px solid #6c6c6c;border-top:none"></div>
<div style="left:4.500px;top:91.500px;width:3.500px;height:8px;background:#18c8c0;border:0.500px solid #0a6c68"></div>
<svg style="left:10px;top:91px" width="10" height="9" viewBox="0 0 10 9"><path d="M0.500 4.500c2.500-4 6.500-4 9 0-2.500 3.500-6.500 3.500-9 0z" fill="#dfe4f0" stroke="#2a3c6c" stroke-width="0.800"/><circle cx="5" cy="4.300" r="1.800" fill="#2a3c6c"/></svg>
<svg style="left:20.500px;top:90.500px" width="11" height="10" viewBox="0 0 11 10"><path d="M2 4l5-3 3 3-1 5H3z" fill="#fbd0d0" stroke="#d82020" stroke-width="0.900"/><path d="M0.500 1l3 3" stroke="#d82020" stroke-width="1"/></svg>
<span style="left:30.6px;top:90.5px;font-size:8.2px;line-height:10px;color:#222;transform:scaleX(0.827);transform-origin:0 0;">A25_DN70L_30-70_P1R17</span>
<svg style="left:4px;top:102.500px" width="11" height="10" viewBox="0 0 11 10"><path d="M1.500 0v3M0 1.500h3" stroke="#18a030" stroke-width="1.200"/><path d="M3 9l2-6M5 9.500l3-5.500M7 9.500l3-4M3 4l7 5" stroke="#d82020" stroke-width="0.900"/></svg>
<span style="left:16px;top:102.5px;font-size:7.6px;line-height:10px;color:#222;transform:scaleX(0.846);transform-origin:0 0;">Add Beamset</span><svg style="left:96.5px;top:102.500px" width="13" height="10" viewBox="0 0 13 10"><path d="M1.500 0v3M0 1.500h3" stroke="#18a030" stroke-width="1.100"/><path d="M4 3l6 6M5 8l4-6M4 6l7-1" stroke="#d82020" stroke-width="0.900" fill="none"/></svg><svg style="left:112.5px;top:102.500px" width="13" height="10" viewBox="0 0 13 10"><path d="M1.500 0v3M0 1.500h3" stroke="#18a030" stroke-width="1.100"/><path d="M4 3l6 6M5 8l4-6M4 6l7-1" stroke="#d82020" stroke-width="0.900" fill="none"/></svg><svg style="left:128.5px;top:102.500px" width="13" height="10" viewBox="0 0 13 10"><path d="M1.500 0v3M0 1.500h3" stroke="#18a030" stroke-width="1.100"/><path d="M4 3l6 6M5 8l4-6M4 6l7-1" stroke="#d82020" stroke-width="0.900" fill="none"/></svg><svg style="left:144.5px;top:102.500px" width="13" height="10" viewBox="0 0 13 10"><path d="M1.500 0v3M0 1.500h3" stroke="#18a030" stroke-width="1.100"/><path d="M4 3l6 6M5 8l4-6M4 6l7-1" stroke="#d82020" stroke-width="0.900" fill="none"/></svg><svg style="left:160.5px;top:102.500px" width="13" height="10" viewBox="0 0 13 10"><path d="M1.500 0v3M0 1.500h3" stroke="#9a9a9a" stroke-width="1.100"/><path d="M4 3l6 6M5 8l4-6M4 6l7-1" stroke="#a8a8a8" stroke-width="0.900" fill="none"/></svg><svg style="left:176.5px;top:102.500px" width="13" height="10" viewBox="0 0 13 10"><path d="M1.500 0v3M0 1.500h3" stroke="#9a9a9a" stroke-width="1.100"/><path d="M4 3l6 6M5 8l4-6M4 6l7-1" stroke="#a8a8a8" stroke-width="0.900" fill="none"/></svg><svg style="left:192.5px;top:102.500px" width="13" height="10" viewBox="0 0 13 10"><path d="M1.500 0v3M0 1.500h3" stroke="#9a9a9a" stroke-width="1.100"/><path d="M4 3l6 6M5 8l4-6M4 6l7-1" stroke="#a8a8a8" stroke-width="0.900" fill="none"/></svg><div style="left:0;top:116px;width:211px;height:16px;background:#eff0fd"></div><svg style="left:3px;top:119px" width="11.500" height="11" viewBox="0 0 11.500 11"><path d="M1 9.500h9M2 8l5-6 2 2-5 5z" fill="#f0a020" stroke="#1c347c" stroke-width="0.900"/><path d="M1 1v8" stroke="#1c347c" stroke-width="1"/></svg><svg style="left:27px;top:119px" width="11.500" height="11" viewBox="0 0 11.500 11"><rect x="1" y="1" width="5" height="4" fill="#a8c8f0" stroke="#2a4ca8" stroke-width="0.800"/><rect x="4" y="4.500" width="6" height="5" fill="#5c8cd8" stroke="#2a4ca8" stroke-width="0.800"/></svg><svg style="left:41px;top:119px" width="11.500" height="11" viewBox="0 0 11.500 11"><path d="M0.500 2h4" stroke="#d82020" stroke-width="1.300"/><rect x="4" y="4.500" width="6" height="5" fill="#5c8cd8" stroke="#2a4ca8" stroke-width="0.800"/></svg><svg style="left:61px;top:119px" width="11.500" height="11" viewBox="0 0 11.500 11"><path d="M1 5h4M3 3v4" stroke="#8ca8d8" stroke-width="1"/><rect x="5.500" y="3" width="3" height="4" fill="#a8c0e8"/></svg><svg style="left:83px;top:119px" width="11.500" height="11" viewBox="0 0 11.500 11"><circle cx="5.500" cy="5.500" r="4.600" fill="#e4e4e4" stroke="#8a8a8a" stroke-width="0.900"/><path d="M7 3L3.500 5.500 7 8z" fill="#8a8a8a"/></svg><svg style="left:96px;top:119px" width="11.500" height="11" viewBox="0 0 11.500 11"><circle cx="5.500" cy="5.500" r="4.600" fill="#e4e4e4" stroke="#8a8a8a" stroke-width="0.900"/><path d="M4 3l3.500 2.500L4 8z" fill="#8a8a8a"/></svg><svg style="left:120px;top:119px" width="11.500" height="11" viewBox="0 0 11.500 11"><path d="M0.500 5.500c2.500-4 7.500-4 10 0-2.500 3.500-7.500 3.500-10 0z" fill="#dfe4f0" stroke="#2a3c6c" stroke-width="0.800"/><circle cx="5.500" cy="5.300" r="2" fill="#2a3c6c"/></svg><svg style="left:136px;top:119px" width="11.500" height="11" viewBox="0 0 11.500 11"><path d="M0.500 6.500c2.500-4 7.500-4 10 0z" fill="#8ca8d8" stroke="#2a3c6c" stroke-width="0.700"/><ellipse cx="5.500" cy="6.500" rx="5" ry="1.800" fill="#5c7cb8"/></svg><svg style="left:185.5px;top:119px" width="11.500" height="11" viewBox="0 0 11.500 11"><rect x="0.800" y="0.800" width="9" height="9" fill="#2c48b4" stroke="#1a2c7c" stroke-width="0.700"/><rect x="2.800" y="1.200" width="5" height="3.300" fill="#e8ecf8"/><rect x="2.800" y="6.300" width="5" height="3.200" fill="#c0c8e0"/></svg><svg style="left:198px;top:119px" width="11.500" height="11" viewBox="0 0 11.500 11"><path d="M0.500 9.500v-6h3l1 1h4v1.500" fill="#f6d270" stroke="#b8861c" stroke-width="0.800"/><path d="M0.500 9.500l2-4h8l-2 4z" fill="#f8dc88" stroke="#b8861c" stroke-width="0.800"/></svg></div>
<div id="right"><div style="left:0.7px;top:-0.8px;width:175.3px;height:18.6px;background:#0b2485"></div><b style="left:76.7px;top:0px;font-size:10px;line-height:17.5px;color:#fff;transform:scaleX(0.825);transform-origin:0 0;">ESBT</b><b style="left:5.6px;top:23.5px;font-size:10px;line-height:12px;color:#14205c;transform:scaleX(0.900);transform-origin:0 0;">ESBT File</b><div class="btn" style="top:41.1px"></div><span style="left:48.299999999999955px;top:43px;font-size:9.8px;line-height:14px;color:#222;transform:scaleX(0.924);transform-origin:0 0;">Open Beamtool File</span><div class="btn" style="top:81.1px"></div><span style="left:25.899999999999977px;top:83px;font-size:9.8px;line-height:14px;color:#222;transform:scaleX(0.907);transform-origin:0 0;">Update All Beamsets and Piece</span><div class="btn" style="top:101.1px"></div><span style="left:35.799999999999955px;top:103px;font-size:9.8px;line-height:14px;color:#222;transform:scaleX(0.888);transform-origin:0 0;">Replace Selected Beamset</span><div class="btn" style="top:121.1px"></div><span style="left:43.60000000000002px;top:123px;font-size:9.8px;line-height:14px;color:#222;transform:scaleX(0.896);transform-origin:0 0;">Add Selected Beamset</span><div class="btn" style="top:140.9px"></div><span style="left:40px;top:142.8px;font-size:9.8px;line-height:14px;color:#222;transform:scaleX(0.917);transform-origin:0 0;">Delete Current Beamset</span><div class="btn" style="top:161.1px"></div><span style="left:61.799999999999955px;top:163px;font-size:9.8px;line-height:14px;color:#222;transform:scaleX(0.889);transform-origin:0 0;">Update Piece</span><div class="btn" style="top:201.1px"></div><span style="left:40px;top:203px;font-size:9.8px;line-height:14px;color:#222;transform:scaleX(0.910);transform-origin:0 0;">Update Reference Table</span><div style="left:5.500px;top:61.200px;width:165.500px;height:16.600px;background:#fff;border:1px solid #c8c8c8"></div><span style="left:8px;top:62.5px;font-size:7px;line-height:8px;color:#444;transform:scaleX(0.947);transform-origin:0 0;">Olympus_New_Weld_Series_Probes.ebwk</span><span style="left:8px;top:183.5px;font-size:9.2px;line-height:11px;color:#1c3c84;transform:scaleX(0.920);transform-origin:0 0;">Show Ref. Table</span><div style="left:111px;top:181.200px;width:60px;height:17px;background:#fff;border:1px solid #c8c8c8"></div><div style="left:111px;top:181.200px;width:12px;height:17px;background:#a9a9a9"></div><span style="left:139px;top:183.5px;font-size:9.8px;line-height:12px;color:#e02828;transform:scaleX(1.086);transform-origin:0 0;">Off</span></div>
<div id="status"><div style="left:0.5px;top:1px;width:14px;height:14px;border:1px solid #2c44a8"></div><svg style="left:3px;top:2.500px" width="10" height="11" viewBox="0 0 10 11"><path d="M2.200 3.800A3.600 3.600 0 1 1 1.500 7.500" fill="none" stroke="#fff" stroke-width="1.400"/><path d="M0.500 1l0.400 4.200 3.600-1.600z" fill="#fff"/></svg><div style="left:15.5px;top:1px;width:14.500px;height:14px;border:1px solid #2c44a8"></div><svg style="left:19px;top:3px" width="8" height="10" viewBox="0 0 8 10"><circle cx="4" cy="2.600" r="1.900" fill="none" stroke="#fff" stroke-width="1.300"/><rect x="1" y="5.500" width="6" height="1.500" fill="#fff"/><rect x="1" y="8" width="6" height="1.300" fill="#fff"/></svg><span style="left:39px;top:0.5px;font-size:8.8px;line-height:15px;color:#fff;transform:scaleX(0.972);transform-origin:0 0;">Scan</span><span style="left:65px;top:0.5px;font-size:8.8px;line-height:15px;color:#fff;transform:scaleX(1.066);transform-origin:0 0;">0.00 mm</span><span style="left:129px;top:0.5px;font-size:8.8px;line-height:15px;color:#fff;transform:scaleX(1.045);transform-origin:0 0;">Index</span><span style="left:157.5px;top:0.5px;font-size:8.8px;line-height:15px;color:#fff;transform:scaleX(1.066);transform-origin:0 0;">0.00 mm</span><span style="left:246.5px;top:0.5px;font-size:8.8px;line-height:15px;color:#fff;transform:scaleX(0.986);transform-origin:0 0;">Acq Rate (Hz)</span><span style="left:306.5px;top:0.5px;font-size:8.8px;line-height:15px;color:#fff;transform:scaleX(0.981);transform-origin:0 0;">0.0</span><span style="left:339px;top:0.5px;font-size:8.8px;line-height:15px;color:#fff;transform:scaleX(1.023);transform-origin:0 0;">Max Rate (mm)</span><span style="left:405px;top:0.5px;font-size:8.8px;line-height:15px;color:#fff;transform:scaleX(1.022);transform-origin:0 0;">0.0</span><span style="left:1079px;top:0.5px;font-size:8.8px;line-height:15px;color:#fff;">0</span><span style="left:1091.5px;top:0.5px;font-size:8.8px;line-height:15px;color:#fff;">x</span><div style="left:805.500px;top:3.500px;width:115px;height:9.500px;background:#fff;border-radius:5px"></div><span style="left:809.5px;top:0.5px;font-size:8.2px;line-height:15px;color:#222;transform:scaleX(0.979);transform-origin:0 0;">Soft State:</span><span style="left:873px;top:0.5px;font-size:8.2px;line-height:15px;color:#222;transform:scaleX(0.980);transform-origin:0 0;">Setup</span><div style="left:925.500px;top:3.500px;width:52px;height:9.500px;background:#fff;border-radius:5px"></div><span style="left:933px;top:0.5px;font-size:8.2px;line-height:15px;color:#222;transform:scaleX(0.954);transform-origin:0 0;">Units:</span><span style="left:958px;top:0.5px;font-size:8.2px;line-height:15px;color:#222;transform:scaleX(0.915);transform-origin:0 0;">mm</span><div style="left:986.500px;top:3px;width:86.500px;height:10.500px;background:#dcdcdc"></div><span style="left:1019.5px;top:0.5px;font-size:8.2px;line-height:15px;color:#222;transform:scaleX(0.951);transform-origin:0 0;">Piece</span><svg style="left:1102px;top:2px" width="20" height="13" viewBox="0 0 20 13"><rect x="1" y="0.800" width="14" height="9" fill="#0b2485" stroke="#fff" stroke-width="1.300"/><path d="M5 12h6M8 10v2" stroke="#fff" stroke-width="1.200"/><circle cx="14.500" cy="8.500" r="4" fill="#e02020"/><path d="M12.800 6.800l3.400 3.400M16.200 6.800l-3.400 3.400" stroke="#fff" stroke-width="1.100"/></svg></div>
</body></html>
